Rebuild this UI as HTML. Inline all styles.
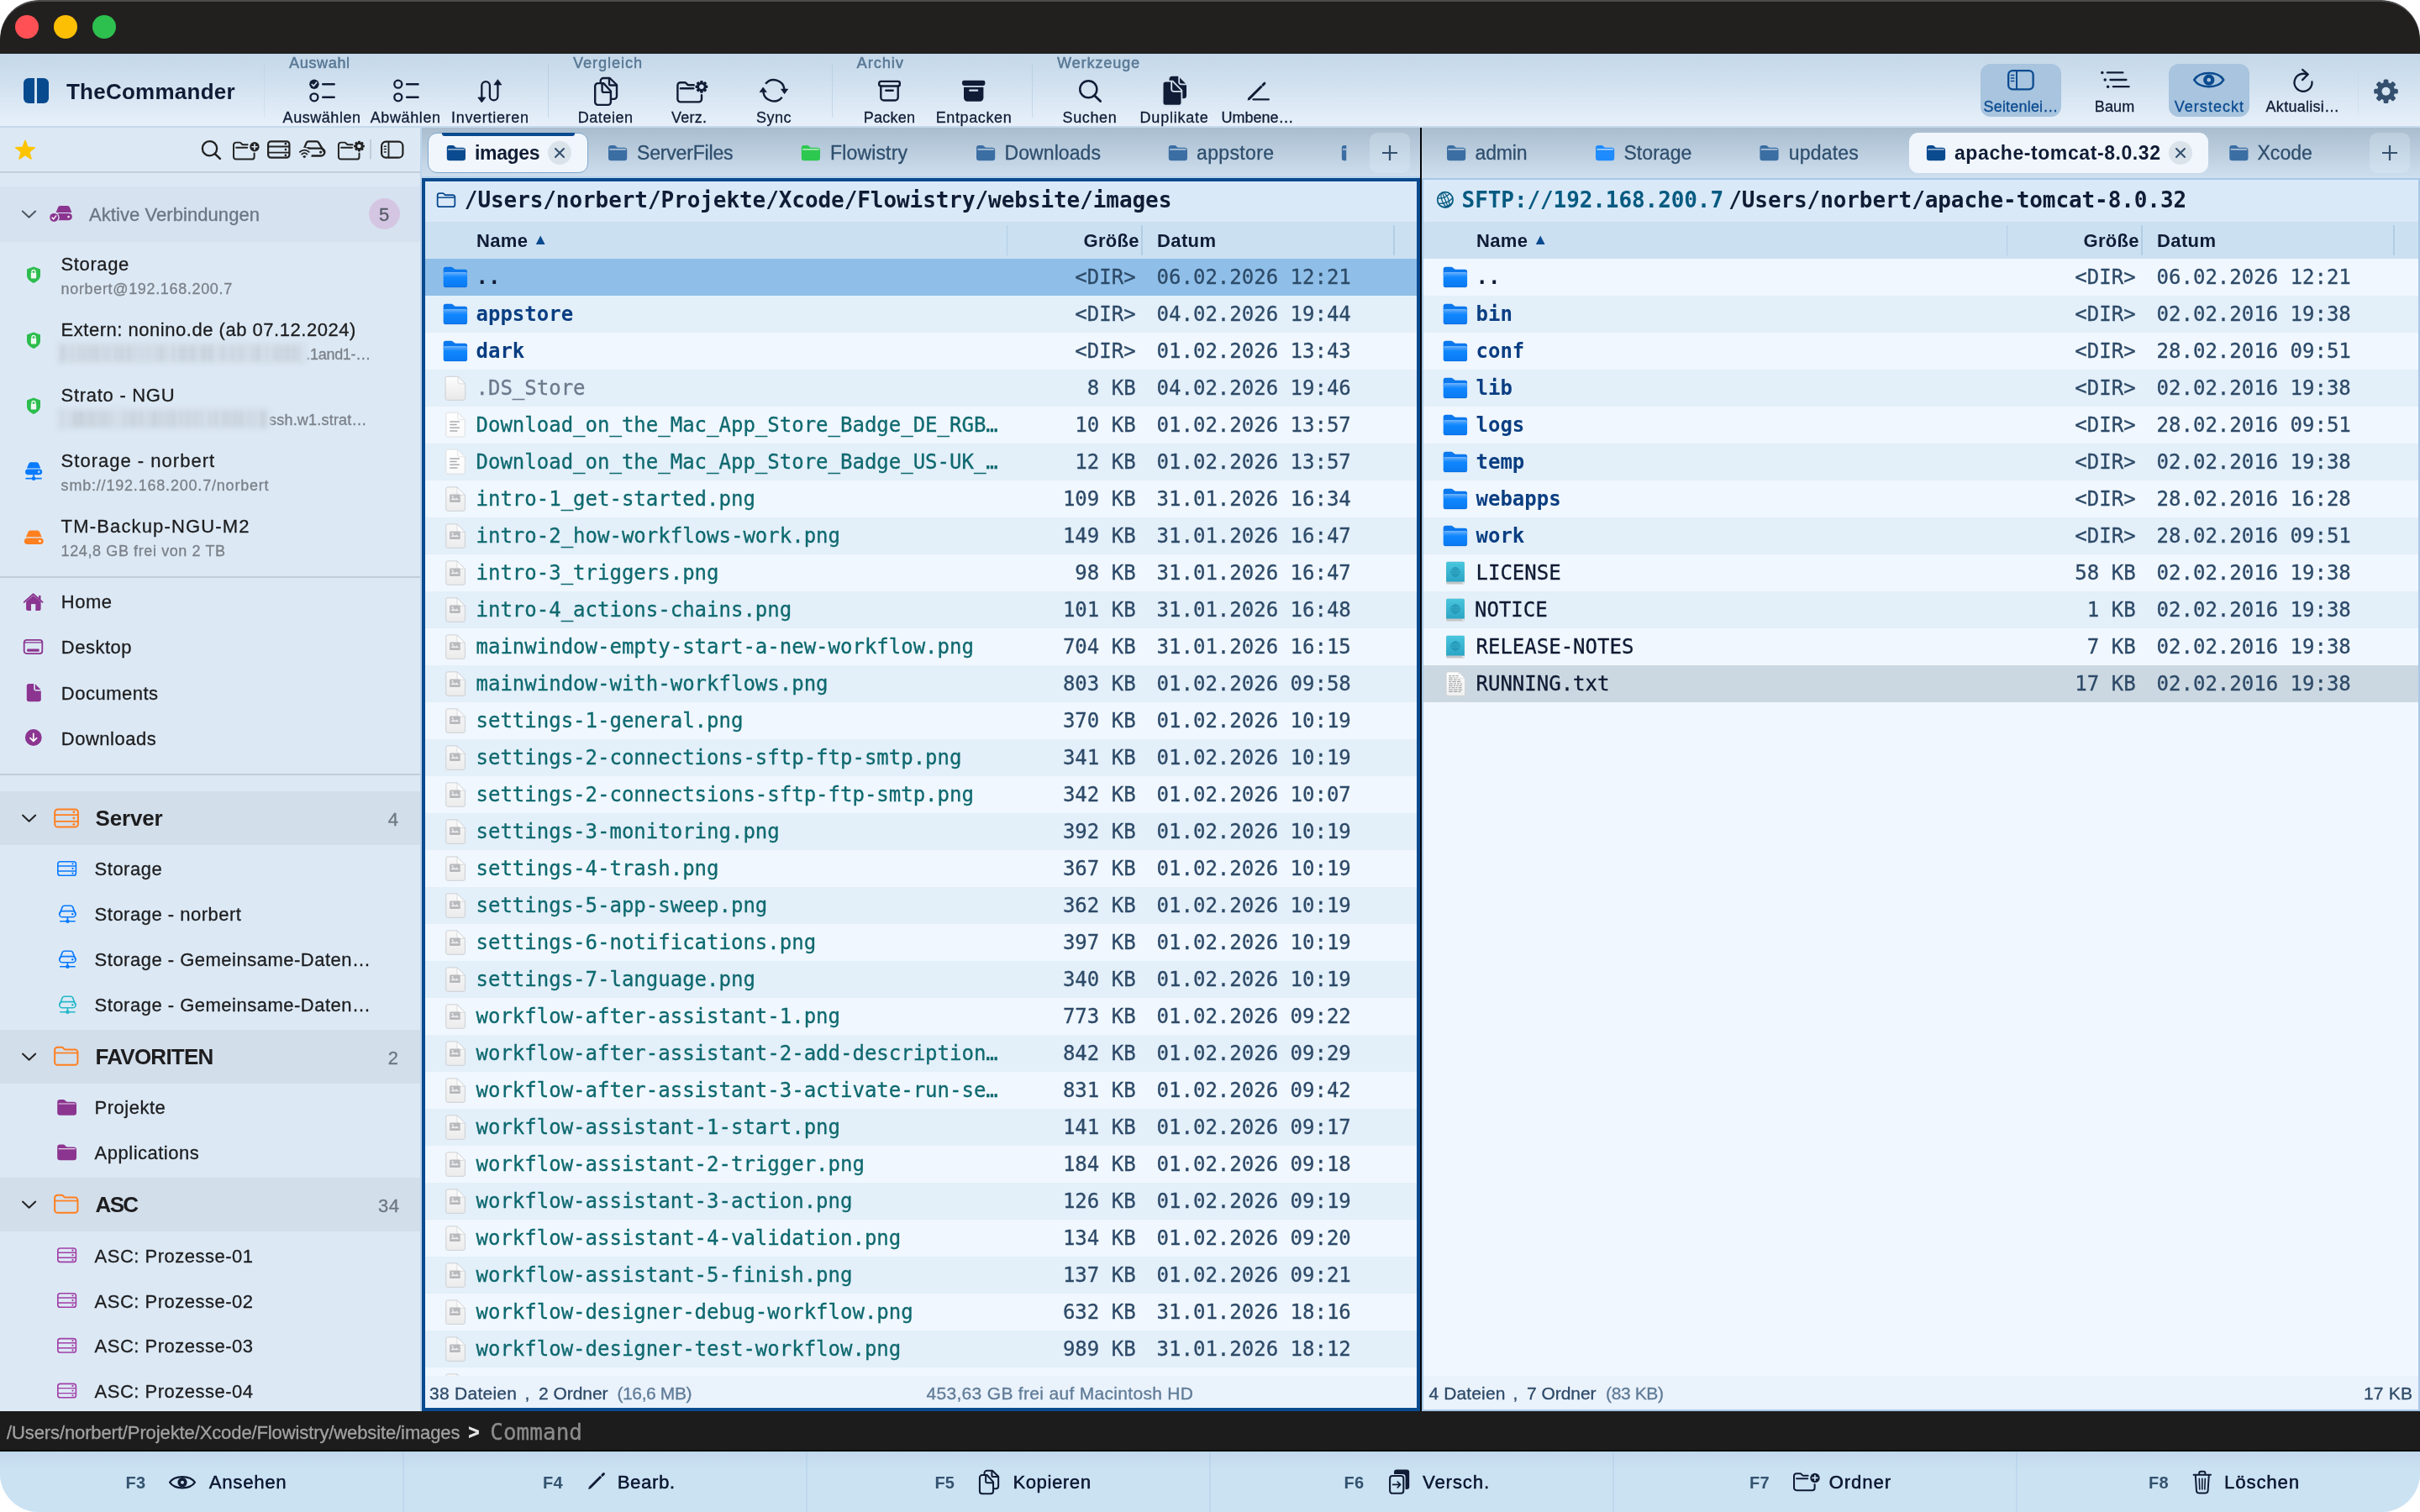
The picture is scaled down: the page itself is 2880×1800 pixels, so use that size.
<!DOCTYPE html><html lang="de"><head><meta charset="utf-8"><title>TheCommander</title><style>
html,body{margin:0;padding:0;background:#fff;}
body{width:2880px;height:1800px;overflow:hidden;position:relative;}
#win{position:absolute;left:0;top:0;width:2880px;height:1800px;border-radius:46px;overflow:hidden;background:#dce9f5;will-change:transform;}
.t{position:absolute;white-space:pre;line-height:1;-webkit-text-stroke:0.3px;}
.b{-webkit-text-stroke:0;}
.s{font-family:"Liberation Sans", sans-serif;}
.m{font-family:"DejaVu Sans Mono", "Liberation Mono", monospace;}
.ov{position:absolute;left:0;top:0;pointer-events:none;}
.row{position:absolute;height:44px;}
</style></head><body><div id="win">
<div style="position:absolute;left:0px;top:0px;width:2880px;height:64px;background:#22201f;box-shadow:inset 0 2px 0 rgba(255,255,255,.20);border-radius:46px 46px 0 0;"></div>
<div style="position:absolute;left:18px;top:18px;width:28px;height:28px;background:#ff5055;border-radius:50%;"></div>
<div style="position:absolute;left:64px;top:18px;width:28px;height:28px;background:#fcbf04;border-radius:50%;"></div>
<div style="position:absolute;left:110px;top:18px;width:28px;height:28px;background:#2dc04f;border-radius:50%;"></div>
<div style="position:absolute;left:0px;top:64px;width:2880px;height:86px;background:linear-gradient(#c4d8e9,#cfdfee 35%,#e7f0fa);"></div>
<div style="position:absolute;left:0px;top:150px;width:2880px;height:2px;background:#c4d9eb;"></div>
<div style="position:absolute;left:28px;top:93px;width:13px;height:30px;background:#074a8e;border-radius:6px 0 0 6px;"></div>
<div style="position:absolute;left:44.3px;top:93px;width:13.3px;height:30px;background:#074a8e;border-radius:0 6px 6px 0;"></div>
<span class="t s b" style="left:79.00px;top:95.99px;font-size:26px;color:#101c35;font-weight:bold;letter-spacing:0.243px;">TheCommander</span>
<div style="position:absolute;left:313.5px;top:76px;width:1.5px;height:64px;background:rgba(160,190,215,.22);"></div>
<div style="position:absolute;left:651.5px;top:76px;width:1.5px;height:64px;background:rgba(160,190,215,.42);"></div>
<div style="position:absolute;left:989.5px;top:76px;width:1.5px;height:64px;background:rgba(160,190,215,.42);"></div>
<div style="position:absolute;left:1227.5px;top:76px;width:1.5px;height:64px;background:rgba(160,190,215,.42);"></div>
<div style="position:absolute;left:2805.5px;top:84px;width:1.4px;height:52px;background:rgba(190,210,228,.4);"></div>
<span class="t s" style="left:344.00px;top:65.76px;font-size:18px;color:#5d7c98;letter-spacing:0.659px;text-shadow:0.35px 0 0 #5d7c98;">Auswahl</span>
<span class="t s" style="left:682.00px;top:65.76px;font-size:18px;color:#5d7c98;letter-spacing:0.992px;text-shadow:0.35px 0 0 #5d7c98;">Vergleich</span>
<span class="t s" style="left:1019.60px;top:65.76px;font-size:18px;color:#5d7c98;letter-spacing:1.037px;text-shadow:0.35px 0 0 #5d7c98;">Archiv</span>
<span class="t s" style="left:1258.00px;top:65.76px;font-size:18px;color:#5d7c98;letter-spacing:0.910px;text-shadow:0.35px 0 0 #5d7c98;">Werkzeuge</span>
<span class="t s" style="left:336.60px;top:130.96px;font-size:18px;color:#101c35;letter-spacing:0.542px;">Auswählen</span>
<span class="t s" style="left:440.75px;top:130.96px;font-size:18px;color:#101c35;letter-spacing:0.605px;">Abwählen</span>
<span class="t s" style="left:537.00px;top:130.96px;font-size:18px;color:#101c35;letter-spacing:0.695px;">Invertieren</span>
<span class="t s" style="left:687.75px;top:130.96px;font-size:18px;color:#101c35;letter-spacing:0.542px;">Dateien</span>
<span class="t s" style="left:799.00px;top:130.96px;font-size:18px;color:#101c35;letter-spacing:0.242px;">Verz.</span>
<span class="t s" style="left:899.95px;top:130.96px;font-size:18px;color:#101c35;letter-spacing:0.490px;">Sync</span>
<span class="t s" style="left:1027.75px;top:130.96px;font-size:18px;color:#101c35;letter-spacing:0.251px;">Packen</span>
<span class="t s" style="left:1113.70px;top:130.96px;font-size:18px;color:#101c35;letter-spacing:0.617px;">Entpacken</span>
<span class="t s" style="left:1264.50px;top:130.96px;font-size:18px;color:#101c35;letter-spacing:0.628px;">Suchen</span>
<span class="t s" style="left:1356.60px;top:130.96px;font-size:18px;color:#101c35;letter-spacing:0.769px;">Duplikate</span>
<span class="t s" style="left:1453.50px;top:130.96px;font-size:18px;color:#101c35;letter-spacing:-0.008px;">Umbene…</span>
<div style="position:absolute;left:2357.4px;top:76px;width:95.4px;height:63.4px;background:#a8c4de;border-radius:12px;"></div>
<div style="position:absolute;left:2581px;top:76px;width:96px;height:63.4px;background:#a8c4de;border-radius:12px;"></div>
<span class="t s" style="left:2360.50px;top:118.26px;font-size:18px;color:#0a4a8f;letter-spacing:0.195px;">Seitenlei…</span>
<span class="t s" style="left:2492.85px;top:118.26px;font-size:18px;color:#101c35;letter-spacing:0.090px;">Baum</span>
<span class="t s" style="left:2587.75px;top:118.26px;font-size:18px;color:#0a4a8f;letter-spacing:1.034px;">Versteckt</span>
<span class="t s" style="left:2696.60px;top:118.26px;font-size:18px;color:#101c35;letter-spacing:0.263px;">Aktualisi…</span>
<svg class="ov" width="2880" height="160" viewBox="0 0 2880 160"><g transform="translate(367.70,94.00)" ><circle cx="6.2" cy="6.2" r="5.7" fill="#101c35"/><path d="M3.6 6.5 L5.5 8.5 L9 4.2" fill="none" stroke="#cfdfee" stroke-width="1.7" stroke-linecap="round" stroke-linejoin="round"/><circle cx="6.2" cy="21.8" r="4.5" fill="none" stroke="#101c35" stroke-width="2.3" stroke-linecap="round" stroke-linejoin="round"/><path d="M16.5 6.2 H30 M16.5 21.8 H30" fill="none" stroke="#101c35" stroke-width="2.4" stroke-linecap="round" stroke-linejoin="round"/></g><g transform="translate(467.60,94.00)" ><circle cx="6.2" cy="6.2" r="4.5" fill="none" stroke="#101c35" stroke-width="2.3" stroke-linecap="round" stroke-linejoin="round"/><circle cx="6.2" cy="21.8" r="4.5" fill="none" stroke="#101c35" stroke-width="2.3" stroke-linecap="round" stroke-linejoin="round"/><path d="M16.5 6.2 H30 M16.5 21.8 H30" fill="none" stroke="#101c35" stroke-width="2.4" stroke-linecap="round" stroke-linejoin="round"/></g><path d="M573.3 117 V101.9 a4.8 4.8 0 0 1 9.6 0 V114.7 a4.75 4.75 0 0 0 9.5 0 V100" fill="none" stroke="#101c35" stroke-width="2.3" stroke-linecap="round" stroke-linejoin="round"/><path d="M568.8 116 h9 l-4.5 6 z M587.9 100.9 h9 l-4.5 -6.2 z" fill="#101c35" stroke="#101c35" stroke-width="0.8" stroke-linejoin="round"/><g transform="translate(707.10,91.40)" ><path d="M7.6 7.2 V5 a3.4 3.4 0 0 1 3.4 -3.4 H18.6 L26.9 9.6 V23.1 a3.4 3.4 0 0 1 -3.4 3.4 H21" fill="none" stroke="#101c35" stroke-width="2.4" stroke-linecap="round" stroke-linejoin="round"/><path d="M17.9 2 V8.3 a1.8 1.8 0 0 0 1.8 1.8 H26.4" fill="none" stroke="#101c35" stroke-width="2.4" stroke-linecap="round" stroke-linejoin="round"/><path d="M4.5 7.7 H11.2 L19.8 17.1 V30.1 a3.4 3.4 0 0 1 -3.4 3.4 H4.5 a3.4 3.4 0 0 1 -3.4 -3.4 V11.1 a3.4 3.4 0 0 1 3.4 -3.4 z" fill="none" stroke="#101c35" stroke-width="2.4" stroke-linecap="round" stroke-linejoin="round"/><path d="M9.5 8.2 V16.7 a1.8 1.8 0 0 0 1.8 1.8 H19.4" fill="none" stroke="#101c35" stroke-width="2.4" stroke-linecap="round" stroke-linejoin="round"/></g><g transform="translate(805.20,97.00)" ><path d="M29.8 16.2 V21 a3.4 3.4 0 0 1 -3.4 3.4 H4.6 a3.4 3.4 0 0 1 -3.4 -3.4 V4.6 a3.4 3.4 0 0 1 3.4 -3.4 H9.5 a2.5 2.5 0 0 1 1.8 0.8 L12.6 3.4 a2.5 2.5 0 0 0 1.8 0.8 H20.5" fill="none" stroke="#101c35" stroke-width="2.4" stroke-linecap="round" stroke-linejoin="round"/><path d="M4.8 8.2 H20" fill="none" stroke="#101c35" stroke-width="2.4" stroke-linecap="round" stroke-linejoin="round"/><circle cx="29.7" cy="6.3" r="5.62" fill="#101c35"/><rect x="27.95" y="-1.10" width="3.5" height="3.70" rx="1.0" fill="#101c35" transform="rotate(0 29.7 6.3)"/><rect x="27.95" y="-1.10" width="3.5" height="3.70" rx="1.0" fill="#101c35" transform="rotate(45 29.7 6.3)"/><rect x="27.95" y="-1.10" width="3.5" height="3.70" rx="1.0" fill="#101c35" transform="rotate(90 29.7 6.3)"/><rect x="27.95" y="-1.10" width="3.5" height="3.70" rx="1.0" fill="#101c35" transform="rotate(135 29.7 6.3)"/><rect x="27.95" y="-1.10" width="3.5" height="3.70" rx="1.0" fill="#101c35" transform="rotate(180 29.7 6.3)"/><rect x="27.95" y="-1.10" width="3.5" height="3.70" rx="1.0" fill="#101c35" transform="rotate(225 29.7 6.3)"/><rect x="27.95" y="-1.10" width="3.5" height="3.70" rx="1.0" fill="#101c35" transform="rotate(270 29.7 6.3)"/><rect x="27.95" y="-1.10" width="3.5" height="3.70" rx="1.0" fill="#101c35" transform="rotate(315 29.7 6.3)"/><circle cx="29.7" cy="6.3" r="2.7" fill="#d4e3f1"/></g><path d="M911.11 99.87 A12.6 12.6 0 0 1 933.41 106.26" fill="none" stroke="#101c35" stroke-width="2.4" stroke-linecap="butt" stroke-linejoin="round"/><path d="M930.69 115.73 A12.6 12.6 0 0 1 908.39 109.34" fill="none" stroke="#101c35" stroke-width="2.4" stroke-linecap="butt" stroke-linejoin="round"/><path d="M929.50 106.10 L937.70 106.10 L933.60 111.70 Z" fill="#101c35" stroke="#101c35" stroke-width="0.7" stroke-linejoin="round"/><path d="M904.10 109.60 L912.30 109.60 L908.20 104.00 Z" fill="#101c35" stroke="#101c35" stroke-width="0.7" stroke-linejoin="round"/><g transform="translate(1045.00,95.70)" ><rect x="1.2" y="1.2" width="24.6" height="5.6" rx="2" fill="none" stroke="#101c35" stroke-width="2.4" stroke-linecap="round" stroke-linejoin="round"/><path d="M3.3 7 V20.3 a3.5 3.5 0 0 0 3.5 3.5 H20.2 a3.5 3.5 0 0 0 3.5 -3.5 V7" fill="none" stroke="#101c35" stroke-width="2.4" stroke-linecap="round" stroke-linejoin="round"/><path d="M9.3 12 H17.7" fill="none" stroke="#101c35" stroke-width="2.4" stroke-linecap="round" stroke-linejoin="round"/></g><g transform="translate(1145.00,95.70)" ><rect x="0" y="0" width="27.4" height="6.2" rx="2.3" fill="#101c35"/><path d="M2 8 H25.4 V20.8 a4.2 4.2 0 0 1 -4.2 4.2 H6.2 a4.2 4.2 0 0 1 -4.2 -4.2 z" fill="#101c35"/><path d="M9.2 12 H18.2" fill="none" stroke="#d3e2f0" stroke-width="2.2" stroke-linecap="round" stroke-linejoin="round"/></g><g transform="translate(1284.00,95.00)" ><circle cx="11.30" cy="11.30" r="10.05" fill="none" stroke="#101c35" stroke-width="2.5" stroke-linecap="round" stroke-linejoin="round"/><path d="M18.60 18.70 L25.60 25.50" fill="none" stroke="#101c35" stroke-width="2.8" stroke-linecap="round" stroke-linejoin="round"/></g><g transform="translate(1384.00,90.70)" ><path d="M11 0 H18.3 L28 9.7 V23 a3.5 3.5 0 0 1 -3.5 3.5 H11 a3.5 3.5 0 0 1 -3.5 -3.5 V3.5 a3.5 3.5 0 0 1 3.5 -3.5 z" fill="#101c35"/><path d="M19.2 0.4 V7.4 a2.3 2.3 0 0 0 2.3 2.3 H27.8" fill="none" stroke="#d3e2f0" stroke-width="1.8" stroke-linecap="round" stroke-linejoin="round"/><path d="M3.3 6 H11.6 L22.4 16.8 V31.2 a3.7 3.7 0 0 1 -3.7 3.7 H3.3 a3.7 3.7 0 0 1 -3.7 -3.7 V9.7 a3.7 3.7 0 0 1 3.7 -3.7 z" fill="#101c35" stroke="#d3e2f0" stroke-width="1.8"/><path d="M10.2 6.6 V15.6 a2.6 2.6 0 0 0 2.6 2.6 H21.8" fill="none" stroke="#d3e2f0" stroke-width="1.9" stroke-linecap="round" stroke-linejoin="round"/></g><g transform="translate(1484.00,98.00)" ><path d="M2.2 19.9 L17.6 4.5" fill="none" stroke="#101c35" stroke-width="3.0" stroke-linecap="butt" stroke-linejoin="round"/><path d="M19 3.1 L20.9 1.2" fill="none" stroke="#101c35" stroke-width="3.0" stroke-linecap="round" stroke-linejoin="round"/><path d="M0.6 21.6 L3.6 20.9 L1.3 18.6 Z" fill="#101c35"/><path d="M7.5 20.4 H25.8" fill="none" stroke="#101c35" stroke-width="2.3" stroke-linecap="round" stroke-linejoin="round"/></g><g transform="translate(2389.00,83.00)" ><rect x="1.15" y="1.15" width="29.5" height="22.2" rx="5" fill="none" stroke="#0a4a8f" stroke-width="2.3" stroke-linecap="round" stroke-linejoin="round"/><path d="M10.97 1 V23.50" fill="none" stroke="#0a4a8f" stroke-width="1.9999999999999998" stroke-linecap="butt" stroke-linejoin="round"/><path d="M4.4 6.6 H7.77 M4.4 10 H7.77 M4.4 13.4 H7.77" fill="none" stroke="#0a4a8f" stroke-width="1.5" stroke-linecap="round" stroke-linejoin="round"/></g><circle cx="2501.8" cy="86.4" r="1.75" fill="#101c35"/><path d="M2507.8 86.4 H2526.4" fill="none" stroke="#101c35" stroke-width="2.3" stroke-linecap="round" stroke-linejoin="round"/><circle cx="2505.2" cy="95" r="1.75" fill="#101c35"/><path d="M2511.4 95 H2530.4" fill="none" stroke="#101c35" stroke-width="2.3" stroke-linecap="round" stroke-linejoin="round"/><circle cx="2508.6" cy="103.2" r="1.75" fill="#101c35"/><path d="M2514.8 103.2 H2533.6" fill="none" stroke="#101c35" stroke-width="2.3" stroke-linecap="round" stroke-linejoin="round"/><g transform="translate(2610.00,83.40)" ><path d="M1.20 11.75 C8.00 1.00 29.50 1.00 36.30 11.75 C29.50 22.50 8.00 22.50 1.20 11.75 Z" fill="none" stroke="#0a4a8f" stroke-width="2.5" stroke-linecap="round" stroke-linejoin="round"/><circle cx="18.75" cy="11.75" r="6.60" fill="#0a4a8f"/><circle cx="18.75" cy="11.75" r="2.30" fill="#a9c4de"/></g><path d="M2745.77 88.94 A10.5 10.5 0 1 0 2751.46 97.38" fill="none" stroke="#101c35" stroke-width="2.3" stroke-linecap="round" stroke-linejoin="round"/><path d="M2740.07 82.94 L2746.77 88.54 L2740.07 95.14" fill="none" stroke="#101c35" stroke-width="2.3" stroke-linecap="round" stroke-linejoin="round"/><circle cx="2839.5" cy="108.7" r="10.58" fill="#34506e"/><rect x="2836.60" y="94.40" width="5.8" height="7.15" rx="1.6" fill="#34506e" transform="rotate(0 2839.5 108.7)"/><rect x="2836.60" y="94.40" width="5.8" height="7.15" rx="1.6" fill="#34506e" transform="rotate(45 2839.5 108.7)"/><rect x="2836.60" y="94.40" width="5.8" height="7.15" rx="1.6" fill="#34506e" transform="rotate(90 2839.5 108.7)"/><rect x="2836.60" y="94.40" width="5.8" height="7.15" rx="1.6" fill="#34506e" transform="rotate(135 2839.5 108.7)"/><rect x="2836.60" y="94.40" width="5.8" height="7.15" rx="1.6" fill="#34506e" transform="rotate(180 2839.5 108.7)"/><rect x="2836.60" y="94.40" width="5.8" height="7.15" rx="1.6" fill="#34506e" transform="rotate(225 2839.5 108.7)"/><rect x="2836.60" y="94.40" width="5.8" height="7.15" rx="1.6" fill="#34506e" transform="rotate(270 2839.5 108.7)"/><rect x="2836.60" y="94.40" width="5.8" height="7.15" rx="1.6" fill="#34506e" transform="rotate(315 2839.5 108.7)"/><circle cx="2839.5" cy="108.7" r="5.0" fill="#d7e5f2"/></svg>
<div style="position:absolute;left:0px;top:152px;width:500px;height:1528px;background:#dce9f5;"></div>
<div style="position:absolute;left:0px;top:204px;width:500px;height:2px;background:#c2cfdb;"></div>
<div style="position:absolute;left:500px;top:152px;width:2px;height:1528px;background:#bdd4ea;"></div>
<div style="position:absolute;left:0px;top:222px;width:500px;height:66px;background:#d7e2f0;"></div>
<div style="position:absolute;left:0px;top:942px;width:500px;height:64px;background:#d2deea;"></div>
<div style="position:absolute;left:0px;top:1226px;width:500px;height:64px;background:#d2deea;"></div>
<div style="position:absolute;left:0px;top:1402px;width:500px;height:64px;background:#d2deea;"></div>
<div style="position:absolute;left:0px;top:686px;width:500px;height:2px;background:#c0cedb;"></div>
<div style="position:absolute;left:0px;top:921px;width:500px;height:2px;background:#c0cedb;"></div>
<span class="t s" style="left:106.00px;top:244.78px;font-size:22px;color:#6a7684;letter-spacing:0.065px;">Aktive Verbindungen</span>
<div style="position:absolute;left:438.5px;top:236.3px;width:37px;height:37px;background:#d4c6e2;border-radius:50%;"></div>
<span class="t s" style="left:450.88px;top:244.98px;font-size:22px;color:#555b66;">5</span>
<span class="t s" style="left:72.60px;top:303.88px;font-size:22px;color:#1d1d1f;letter-spacing:0.606px;">Storage</span>
<span class="t s" style="left:72.60px;top:334.76px;font-size:18px;color:#7b8088;letter-spacing:0.659px;">norbert@192.168.200.7</span>
<span class="t s" style="left:72.60px;top:381.88px;font-size:22px;color:#1d1d1f;letter-spacing:0.524px;">Extern: nonino.de (ab 07.12.2024)</span>
<span class="t s" style="left:364.30px;top:412.76px;font-size:18px;color:#7b8088;letter-spacing:-0.295px;">.1and1-…</span>
<span class="t s" style="left:72.60px;top:459.88px;font-size:22px;color:#1d1d1f;letter-spacing:0.714px;">Strato - NGU</span>
<span class="t s" style="left:320.00px;top:490.76px;font-size:18px;color:#7b8088;letter-spacing:0.206px;">ssh.w1.strat…</span>
<span class="t s" style="left:72.60px;top:537.88px;font-size:22px;color:#1d1d1f;letter-spacing:1.012px;">Storage - norbert</span>
<span class="t s" style="left:72.60px;top:568.76px;font-size:18px;color:#7b8088;letter-spacing:0.802px;">smb://192.168.200.7/norbert</span>
<span class="t s" style="left:72.60px;top:615.88px;font-size:22px;color:#1d1d1f;letter-spacing:1.161px;">TM-Backup-NGU-M2</span>
<span class="t s" style="left:72.60px;top:646.76px;font-size:18px;color:#7b8088;letter-spacing:0.606px;">124,8 GB frei von 2 TB</span>
<div style="position:absolute;left:66px;top:406px;width:300px;height:29px;background:#d7e2ed;filter:blur(2px);border-radius:5px;"></div>
<div style="position:absolute;left:72px;top:411px;width:288px;height:19px;background:linear-gradient(90deg,#c3ced9 0.0px 3.6px,#d6e1ec 3.6px 5.7px,#c5d0db 5.7px 8.4px,#d6e1ec 8.4px 11.8px,#c9d4df 11.8px 16.3px,#d6e1ec 16.3px 21.0px,#c3ced9 21.0px 23.6px,#d6e1ec 23.6px 26.7px,#c3ced9 26.7px 30.0px,#d6e1ec 30.0px 33.4px,#c9d4df 33.4px 38.8px,#d6e1ec 38.8px 40.8px,#c3ced9 40.8px 45.5px,#d6e1ec 45.5px 49.0px,#c9d4df 49.0px 53.5px,#d6e1ec 53.5px 56.4px,#c5d0db 56.4px 59.1px,#d6e1ec 59.1px 63.6px,#c5d0db 63.6px 67.6px,#d6e1ec 67.6px 70.9px,#c3ced9 70.9px 75.4px,#d6e1ec 75.4px 79.3px,#c5d0db 79.3px 83.8px,#d6e1ec 83.8px 87.6px,#c3ced9 87.6px 90.4px,#d6e1ec 90.4px 94.4px,#cdd8e3 94.4px 99.1px,#d6e1ec 99.1px 102.3px,#cdd8e3 102.3px 107.5px,#d6e1ec 107.5px 110.7px,#c9d4df 110.7px 114.4px,#d6e1ec 114.4px 116.8px,#c5d0db 116.8px 121.7px,#d6e1ec 121.7px 124.1px,#cdd8e3 124.1px 128.4px,#d6e1ec 128.4px 133.0px,#c3ced9 133.0px 136.5px,#d6e1ec 136.5px 141.4px,#c5d0db 141.4px 145.7px,#d6e1ec 145.7px 147.8px,#c3ced9 147.8px 150.8px,#d6e1ec 150.8px 154.0px,#c5d0db 154.0px 159.9px,#d6e1ec 159.9px 161.7px,#cdd8e3 161.7px 165.4px,#d6e1ec 165.4px 168.1px,#c3ced9 168.1px 172.6px,#d6e1ec 172.6px 175.7px,#c3ced9 175.7px 181.5px,#d6e1ec 181.5px 184.7px,#cdd8e3 184.7px 187.4px,#d6e1ec 187.4px 191.4px,#c5d0db 191.4px 194.8px,#d6e1ec 194.8px 197.7px,#c9d4df 197.7px 200.3px,#d6e1ec 200.3px 203.4px,#c9d4df 203.4px 208.0px,#d6e1ec 208.0px 211.3px,#c9d4df 211.3px 216.4px,#d6e1ec 216.4px 218.4px,#cdd8e3 218.4px 222.3px,#d6e1ec 222.3px 227.0px,#c5d0db 227.0px 229.8px,#d6e1ec 229.8px 232.9px,#c5d0db 232.9px 238.5px,#d6e1ec 238.5px 242.8px,#cdd8e3 242.8px 247.8px,#d6e1ec 247.8px 252.7px,#c9d4df 252.7px 258.6px,#d6e1ec 258.6px 260.6px,#c3ced9 260.6px 263.7px,#d6e1ec 263.7px 267.5px,#c5d0db 267.5px 271.7px,#d6e1ec 271.7px 275.2px,#c5d0db 275.2px 278.7px,#d6e1ec 278.7px 280.7px,#c9d4df 280.7px 285.3px,#d6e1ec 285.3px 288.0px,#c3ced9 288.0px 292.9px,#d6e1ec 292.9px 296.2px);filter:blur(2.6px);"></div>
<div style="position:absolute;left:66px;top:484px;width:256px;height:29px;background:#d7e2ed;filter:blur(2px);border-radius:5px;"></div>
<div style="position:absolute;left:72px;top:489px;width:244px;height:19px;background:linear-gradient(90deg,#cdd8e3 0.0px 4.1px,#d6e1ec 4.1px 8.6px,#cdd8e3 8.6px 12.5px,#d6e1ec 12.5px 15.4px,#c3ced9 15.4px 20.1px,#d6e1ec 20.1px 21.9px,#c3ced9 21.9px 27.8px,#d6e1ec 27.8px 30.8px,#c3ced9 30.8px 34.5px,#d6e1ec 34.5px 36.2px,#c5d0db 36.2px 40.7px,#d6e1ec 40.7px 44.1px,#c9d4df 44.1px 48.7px,#d6e1ec 48.7px 50.5px,#c5d0db 50.5px 55.1px,#d6e1ec 55.1px 57.1px,#cdd8e3 57.1px 63.0px,#d6e1ec 63.0px 66.6px,#cdd8e3 66.6px 69.5px,#d6e1ec 69.5px 74.0px,#c9d4df 74.0px 78.2px,#d6e1ec 78.2px 80.8px,#c5d0db 80.8px 83.6px,#d6e1ec 83.6px 86.3px,#c3ced9 86.3px 90.5px,#d6e1ec 90.5px 94.4px,#c5d0db 94.4px 97.6px,#d6e1ec 97.6px 102.5px,#c3ced9 102.5px 105.5px,#d6e1ec 105.5px 108.9px,#c3ced9 108.9px 114.0px,#d6e1ec 114.0px 116.6px,#c5d0db 116.6px 121.5px,#d6e1ec 121.5px 123.9px,#c9d4df 123.9px 129.6px,#d6e1ec 129.6px 132.4px,#c5d0db 132.4px 136.7px,#d6e1ec 136.7px 141.0px,#c9d4df 141.0px 145.7px,#d6e1ec 145.7px 149.3px,#c9d4df 149.3px 154.6px,#d6e1ec 154.6px 159.0px,#c3ced9 159.0px 162.2px,#d6e1ec 162.2px 165.4px,#cdd8e3 165.4px 171.4px,#d6e1ec 171.4px 175.7px,#c5d0db 175.7px 179.1px,#d6e1ec 179.1px 183.0px,#c5d0db 183.0px 187.1px,#d6e1ec 187.1px 191.8px,#c9d4df 191.8px 197.7px,#d6e1ec 197.7px 200.5px,#c5d0db 200.5px 203.3px,#d6e1ec 203.3px 206.5px,#c3ced9 206.5px 209.7px,#d6e1ec 209.7px 213.4px,#c3ced9 213.4px 217.5px,#d6e1ec 217.5px 221.3px,#cdd8e3 221.3px 226.7px,#d6e1ec 226.7px 228.7px,#cdd8e3 228.7px 233.9px,#d6e1ec 233.9px 238.0px,#c5d0db 238.0px 243.6px,#d6e1ec 243.6px 246.7px);filter:blur(2.6px);"></div>
<span class="t s" style="left:72.80px;top:706.38px;font-size:22px;color:#1d1d1f;letter-spacing:0.500px;">Home</span>
<span class="t s" style="left:72.80px;top:760.48px;font-size:22px;color:#1d1d1f;letter-spacing:0.500px;">Desktop</span>
<span class="t s" style="left:72.80px;top:814.58px;font-size:22px;color:#1d1d1f;letter-spacing:0.500px;">Documents</span>
<span class="t s" style="left:72.80px;top:868.68px;font-size:22px;color:#1d1d1f;letter-spacing:0.500px;">Downloads</span>
<span class="t s b" style="left:113.60px;top:961.39px;font-size:26px;color:#1d1d1f;font-weight:bold;letter-spacing:-0.194px;">Server</span>
<span class="t s b" style="left:113.60px;top:1245.39px;font-size:26px;color:#1d1d1f;font-weight:bold;letter-spacing:-0.770px;">FAVORITEN</span>
<span class="t s b" style="left:113.60px;top:1421.39px;font-size:26px;color:#1d1d1f;font-weight:bold;letter-spacing:-1.703px;">ASC</span>
<span class="t s" style="left:461.75px;top:965.38px;font-size:22px;color:#6e7781;">4</span>
<span class="t s" style="left:461.75px;top:1249.38px;font-size:22px;color:#6e7781;">2</span>
<span class="t s" style="left:449.92px;top:1425.38px;font-size:22px;color:#6e7781;letter-spacing:0.600px;">34</span>
<span class="t s" style="left:112.60px;top:1024.38px;font-size:22px;color:#1d1d1f;letter-spacing:0.500px;">Storage</span>
<span class="t s" style="left:112.60px;top:1078.38px;font-size:22px;color:#1d1d1f;letter-spacing:0.500px;">Storage - norbert</span>
<span class="t s" style="left:112.60px;top:1132.38px;font-size:22px;color:#1d1d1f;letter-spacing:0.500px;">Storage - Gemeinsame-Daten…</span>
<span class="t s" style="left:112.60px;top:1186.38px;font-size:22px;color:#1d1d1f;letter-spacing:0.500px;">Storage - Gemeinsame-Daten…</span>
<span class="t s" style="left:112.60px;top:1308.38px;font-size:22px;color:#1d1d1f;letter-spacing:0.500px;">Projekte</span>
<span class="t s" style="left:112.60px;top:1361.98px;font-size:22px;color:#1d1d1f;letter-spacing:0.500px;">Applications</span>
<span class="t s" style="left:112.60px;top:1484.78px;font-size:22px;color:#1d1d1f;letter-spacing:0.500px;">ASC: Prozesse-01</span>
<span class="t s" style="left:112.60px;top:1538.58px;font-size:22px;color:#1d1d1f;letter-spacing:0.500px;">ASC: Prozesse-02</span>
<span class="t s" style="left:112.60px;top:1592.38px;font-size:22px;color:#1d1d1f;letter-spacing:0.500px;">ASC: Prozesse-03</span>
<span class="t s" style="left:112.60px;top:1646.18px;font-size:22px;color:#1d1d1f;letter-spacing:0.500px;">ASC: Prozesse-04</span>
<svg class="ov" width="500" height="1680" viewBox="0 0 500 1680"><path d="M30.00 167.50 L32.94 175.36 L41.32 175.72 L34.75 180.94 L36.99 189.03 L30.00 184.40 L23.01 189.03 L25.25 180.94 L18.68 175.72 L27.06 175.36 Z" fill="#ffc400" stroke="#ffc400" stroke-width="1.6" stroke-linejoin="round"/><g transform="translate(239.80,167.00)" ><circle cx="9.71" cy="9.71" r="8.64" fill="none" stroke="#222" stroke-width="2.3" stroke-linecap="round" stroke-linejoin="round"/><path d="M15.98 16.07 L22.00 21.91" fill="none" stroke="#222" stroke-width="2.5999999999999996" stroke-linecap="round" stroke-linejoin="round"/></g><g transform="translate(277.00,168.60) scale(0.86)" ><path d="M29.8 16.2 V21 a3.4 3.4 0 0 1 -3.4 3.4 H4.6 a3.4 3.4 0 0 1 -3.4 -3.4 V4.6 a3.4 3.4 0 0 1 3.4 -3.4 H9.5 a2.5 2.5 0 0 1 1.8 0.8 L12.6 3.4 a2.5 2.5 0 0 0 1.8 0.8 H20.5" fill="none" stroke="#222" stroke-width="2.3" stroke-linecap="round" stroke-linejoin="round"/><path d="M4.8 8.2 H20" fill="none" stroke="#222" stroke-width="2.3" stroke-linecap="round" stroke-linejoin="round"/><circle cx="30.2" cy="7.2" r="6.6" fill="#222"/><path d="M26.8 7.2 h6.8 M30.2 3.8 v6.8" fill="none" stroke="#dce9f5" stroke-width="1.9" stroke-linecap="round" stroke-linejoin="round"/></g><g transform="translate(318.00,167.30)" ><rect x="1.1" y="1.1" width="25.30" height="19.30" rx="3.33" fill="none" stroke="#222" stroke-width="2.2" stroke-linecap="round" stroke-linejoin="round"/><path d="M1 7.17 H26.50 M1 14.33 H26.50" fill="none" stroke="#222" stroke-width="1.87" stroke-linecap="butt" stroke-linejoin="round"/><circle cx="21.94" cy="3.88" r="1.34" fill="#222"/><circle cx="21.94" cy="10.75" r="1.34" fill="#222"/><circle cx="21.94" cy="17.62" r="1.34" fill="#222"/></g><g transform="translate(356.00,167.30)" ><path d="M11.5 9.2 L7.2 9.2 M5.6 10.4 L8.6 2.8 a3 3 0 0 1 2.8 -1.8 H20.6 a3 3 0 0 1 2.8 1.8 L29.6 13" fill="none" stroke="#222" stroke-width="2.3" stroke-linecap="round" stroke-linejoin="round"/><path d="M11 9.4 H26 a4.4 4.4 0 0 1 0 8.8 H11.8" fill="none" stroke="#222" stroke-width="2.3" stroke-linecap="round" stroke-linejoin="round"/><circle cx="25.6" cy="13.8" r="1.6" fill="#222"/><circle cx="6.2" cy="17" r="8.6" fill="#dce9f5"/><path d="M0.9 13.6 a7.6 7.6 0 0 1 10.8 0" fill="none" stroke="#222" stroke-width="1.9" stroke-linecap="round" stroke-linejoin="round"/><path d="M3.2 16.3 a4.4 4.4 0 0 1 6.2 0" fill="none" stroke="#222" stroke-width="1.9" stroke-linecap="round" stroke-linejoin="round"/><path d="M6.3 20.8 L4.6 19 a2.4 2.4 0 0 1 3.4 0 Z" fill="#222" stroke="#222" stroke-width="0.8" stroke-linejoin="round"/></g><g transform="translate(401.90,168.60) scale(0.86)" ><path d="M29.8 16.2 V21 a3.4 3.4 0 0 1 -3.4 3.4 H4.6 a3.4 3.4 0 0 1 -3.4 -3.4 V4.6 a3.4 3.4 0 0 1 3.4 -3.4 H9.5 a2.5 2.5 0 0 1 1.8 0.8 L12.6 3.4 a2.5 2.5 0 0 0 1.8 0.8 H20.5" fill="none" stroke="#222" stroke-width="2.3" stroke-linecap="round" stroke-linejoin="round"/><path d="M4.8 8.2 H20" fill="none" stroke="#222" stroke-width="2.3" stroke-linecap="round" stroke-linejoin="round"/><circle cx="29.7" cy="6.3" r="5.62" fill="#222"/><rect x="27.95" y="-1.10" width="3.5" height="3.70" rx="1.0" fill="#222" transform="rotate(0 29.7 6.3)"/><rect x="27.95" y="-1.10" width="3.5" height="3.70" rx="1.0" fill="#222" transform="rotate(45 29.7 6.3)"/><rect x="27.95" y="-1.10" width="3.5" height="3.70" rx="1.0" fill="#222" transform="rotate(90 29.7 6.3)"/><rect x="27.95" y="-1.10" width="3.5" height="3.70" rx="1.0" fill="#222" transform="rotate(135 29.7 6.3)"/><rect x="27.95" y="-1.10" width="3.5" height="3.70" rx="1.0" fill="#222" transform="rotate(180 29.7 6.3)"/><rect x="27.95" y="-1.10" width="3.5" height="3.70" rx="1.0" fill="#222" transform="rotate(225 29.7 6.3)"/><rect x="27.95" y="-1.10" width="3.5" height="3.70" rx="1.0" fill="#222" transform="rotate(270 29.7 6.3)"/><rect x="27.95" y="-1.10" width="3.5" height="3.70" rx="1.0" fill="#222" transform="rotate(315 29.7 6.3)"/><circle cx="29.7" cy="6.3" r="2.7" fill="#dce9f5"/></g><path d="M441 166 V189.6" stroke="#b9c6d2" stroke-width="1.6"/><g transform="translate(453.00,167.60)" ><rect x="1.1" y="1.1" width="25.3" height="19.0" rx="5" fill="none" stroke="#222" stroke-width="2.2" stroke-linecap="round" stroke-linejoin="round"/><path d="M9.49 1 V20.20" fill="none" stroke="#222" stroke-width="1.9000000000000001" stroke-linecap="butt" stroke-linejoin="round"/><path d="M4.4 6.6 H6.29 M4.4 10 H6.29 M4.4 13.4 H6.29" fill="none" stroke="#222" stroke-width="1.5" stroke-linecap="round" stroke-linejoin="round"/></g><g transform="translate(25.90,250.50)" ><path d="M1 1 L8.60 8.20 L16.20 1" fill="none" stroke="#4e5560" stroke-width="2.0" stroke-linecap="round" stroke-linejoin="round"/></g><g transform="translate(59.00,245.00)" ><path d="M7.6 8 L10 1.9 a2.8 2.8 0 0 1 2.6 -1.9 H21.4 a2.8 2.8 0 0 1 2.6 1.9 L26.4 8 Z" fill="#8b3590"/><rect x="6" y="9" width="20.8" height="8.2" rx="4.1" fill="#8b3590"/><circle cx="22.6" cy="13.1" r="1.35" fill="#ffffff" fill-opacity="0.9"/><circle cx="5.3" cy="13.9" r="6.4" fill="#d7e2f0"/><circle cx="5.3" cy="13.9" r="5" fill="#8b3590"/><path d="M3 14.1 L4.7 15.9 L7.7 11.9" fill="none" stroke="#ffffff" stroke-width="1.4" stroke-linecap="round" stroke-linejoin="round"/></g><g transform="translate(31.80,317.20)" ><path d="M8.2 0.2 L15.6 3 a1 1 0 0 1 0.6 0.9 V10.6 c0 4.2 -3.4 7.4 -8 9.2 c-4.6 -1.8 -8 -5 -8 -9.2 V3.9 a1 1 0 0 1 0.6 -0.9 Z" fill="#2dbd4e"/><rect x="5" y="7.6" width="6.4" height="6.6" rx="0.9" fill="#ffffff" fill-opacity="0.92"/><path d="M6.2 7.8 V6.3 a2 2 0 0 1 4 0 V7.8" fill="none" stroke="#ffffff" stroke-opacity="0.92" stroke-width="1.3"/></g><g transform="translate(31.80,395.20)" ><path d="M8.2 0.2 L15.6 3 a1 1 0 0 1 0.6 0.9 V10.6 c0 4.2 -3.4 7.4 -8 9.2 c-4.6 -1.8 -8 -5 -8 -9.2 V3.9 a1 1 0 0 1 0.6 -0.9 Z" fill="#2dbd4e"/><rect x="5" y="7.6" width="6.4" height="6.6" rx="0.9" fill="#ffffff" fill-opacity="0.92"/><path d="M6.2 7.8 V6.3 a2 2 0 0 1 4 0 V7.8" fill="none" stroke="#ffffff" stroke-opacity="0.92" stroke-width="1.3"/></g><g transform="translate(31.80,473.20)" ><path d="M8.2 0.2 L15.6 3 a1 1 0 0 1 0.6 0.9 V10.6 c0 4.2 -3.4 7.4 -8 9.2 c-4.6 -1.8 -8 -5 -8 -9.2 V3.9 a1 1 0 0 1 0.6 -0.9 Z" fill="#2dbd4e"/><rect x="5" y="7.6" width="6.4" height="6.6" rx="0.9" fill="#ffffff" fill-opacity="0.92"/><path d="M6.2 7.8 V6.3 a2 2 0 0 1 4 0 V7.8" fill="none" stroke="#ffffff" stroke-opacity="0.92" stroke-width="1.3"/></g><g transform="translate(30.00,550.20)" ><path d="M1.9 7.2 L4.2 1.7 a2.5 2.5 0 0 1 2.3 -1.7 H13.7 a2.5 2.5 0 0 1 2.3 1.7 L18.3 7.2 Z" fill="#0a7aff"/><rect x="0" y="8.2" width="20.2" height="6.8" rx="3.4" fill="#0a7aff"/><circle cx="16.3" cy="11.6" r="1.2" fill="#fff" fill-opacity="0.85"/><path d="M10.1 15 V19.5 M1.2 19.5 H19" fill="none" stroke="#0a7aff" stroke-width="1.7" stroke-linecap="round" stroke-linejoin="round"/><circle cx="10.1" cy="19.5" r="2.4" fill="#0a7aff"/></g><g transform="translate(28.90,631.50)" ><path d="M2.00 7.70 L4.60 1.80 a2.60 2.60 0 0 1 2.40 -1.80 H15.80 a2.60 2.60 0 0 1 2.40 1.80 L20.80 7.70 Z" fill="#ff8020"/><rect x="0" y="8.90" width="22.80" height="7.60" rx="3.80" fill="#ff8020"/><circle cx="18.50" cy="12.70" r="1.40" fill="#ffffff" fill-opacity="0.85"/></g><g transform="translate(27.80,706.30)" ><path d="M0.9 10.6 L11.8 0.9 L22.8 10.6" fill="none" stroke="#8b3590" stroke-width="1.9" stroke-linecap="round" stroke-linejoin="round"/><path d="M3.3 10 L11.8 2.6 L20.8 10 V18.8 a2 2 0 0 1 -2 2 H5.3 a2 2 0 0 1 -2 -2 Z" fill="#8b3590"/><rect x="18.3" y="2.6" width="2.4" height="5" fill="#8b3590"/><rect x="9.2" y="12.8" width="5.3" height="8.2" fill="#dce9f5"/></g><g transform="translate(27.80,760.90)" ><rect x="0.9" y="0.9" width="21.6" height="16.3" rx="3" fill="none" stroke="#8b3590" stroke-width="1.8" stroke-linecap="round" stroke-linejoin="round"/><path d="M1 4 H22.4" fill="none" stroke="#8b3590" stroke-width="1.3" stroke-linecap="butt" stroke-linejoin="round"/><rect x="4.3" y="11.6" width="14.6" height="3.3" rx="1" fill="#8b3590"/></g><g transform="translate(31.80,814.00)" ><path d="M2.8 0 H8.4 V6 a2.4 2.4 0 0 0 2.4 2.4 H17 V18.5 a2.8 2.8 0 0 1 -2.8 2.8 H2.8 a2.8 2.8 0 0 1 -2.8 -2.8 V2.8 a2.8 2.8 0 0 1 2.8 -2.8 Z" fill="#8b3590"/><path d="M10 0.3 L16.7 7 H11.2 a1.2 1.2 0 0 1 -1.2 -1.2 Z" fill="#8b3590"/></g><circle cx="39.8" cy="878" r="9.9" fill="#8b3590"/><path d="M39.8 873.4 V882.2 M36.0 878.6 L39.8 882.4 L43.599999999999994 878.6" fill="none" stroke="#ffffff" stroke-width="1.7" stroke-linecap="round" stroke-linejoin="round"/><g transform="translate(26.00,969.60)" ><path d="M1 1 L8.60 8.20 L16.20 1" fill="none" stroke="#222" stroke-width="2.0" stroke-linecap="round" stroke-linejoin="round"/></g><g transform="translate(64.20,962.50)" ><rect x="1.0" y="1.0" width="27.70" height="21.00" rx="3.60" fill="none" stroke="#ff7f1f" stroke-width="2.0" stroke-linecap="round" stroke-linejoin="round"/><path d="M1 7.67 H28.70 M1 15.33 H28.70" fill="none" stroke="#ff7f1f" stroke-width="1.7" stroke-linecap="butt" stroke-linejoin="round"/><circle cx="23.70" cy="4.13" r="1.45" fill="#ff7f1f"/><circle cx="23.70" cy="11.50" r="1.45" fill="#ff7f1f"/><circle cx="23.70" cy="18.87" r="1.45" fill="#ff7f1f"/></g><g transform="translate(26.00,1253.60)" ><path d="M1 1 L8.60 8.20 L16.20 1" fill="none" stroke="#222" stroke-width="2.0" stroke-linecap="round" stroke-linejoin="round"/></g><g transform="translate(64.00,1245.60)" ><path d="M1.15 4.39 a3.25 3.25 0 0 1 3.25 -3.25 H9.36 a2.39 2.39 0 0 1 1.72 0.76 L12.32 3.25 a2.39 2.39 0 0 0 1.72 0.76 H25.21 a3.25 3.25 0 0 1 3.25 3.25 V19.01 a3.25 3.25 0 0 1 -3.25 3.25 H4.39 a3.25 3.25 0 0 1 -3.25 -3.25 Z" fill="none" stroke="#ff7f1f" stroke-width="2.0" stroke-linecap="round" stroke-linejoin="round"/><path d="M1.53 7.93 H28.07" fill="none" stroke="#ff7f1f" stroke-width="1.7" stroke-linecap="butt" stroke-linejoin="round"/></g><g transform="translate(26.00,1429.60)" ><path d="M1 1 L8.60 8.20 L16.20 1" fill="none" stroke="#222" stroke-width="2.0" stroke-linecap="round" stroke-linejoin="round"/></g><g transform="translate(64.00,1421.60)" ><path d="M1.15 4.39 a3.25 3.25 0 0 1 3.25 -3.25 H9.36 a2.39 2.39 0 0 1 1.72 0.76 L12.32 3.25 a2.39 2.39 0 0 0 1.72 0.76 H25.21 a3.25 3.25 0 0 1 3.25 3.25 V19.01 a3.25 3.25 0 0 1 -3.25 3.25 H4.39 a3.25 3.25 0 0 1 -3.25 -3.25 Z" fill="none" stroke="#ff7f1f" stroke-width="2.0" stroke-linecap="round" stroke-linejoin="round"/><path d="M1.53 7.93 H28.07" fill="none" stroke="#ff7f1f" stroke-width="1.7" stroke-linecap="butt" stroke-linejoin="round"/></g><g transform="translate(68.00,1025.00)" ><rect x="0.8" y="0.8" width="21.60" height="16.40" rx="2.81" fill="none" stroke="#0a7aff" stroke-width="1.6" stroke-linecap="round" stroke-linejoin="round"/><path d="M1 6.00 H22.20 M1 12.00 H22.20" fill="none" stroke="#0a7aff" stroke-width="1.36" stroke-linecap="butt" stroke-linejoin="round"/><circle cx="18.51" cy="3.30" r="1.13" fill="#0a7aff"/><circle cx="18.51" cy="9.00" r="1.13" fill="#0a7aff"/><circle cx="18.51" cy="14.70" r="1.13" fill="#0a7aff"/></g><g transform="translate(69.90,1077.40)" ><path d="M1.2 10.2 L4.4 2.2 a2.4 2.4 0 0 1 2.2 -1.4 H14.4 a2.4 2.4 0 0 1 2.2 1.4 L19.8 10.2" fill="none" stroke="#0a7aff" stroke-width="1.6" stroke-linecap="round" stroke-linejoin="round"/><rect x="0.8" y="7.2" width="19.4" height="7.2" rx="3.6" fill="none" stroke="#0a7aff" stroke-width="1.6" stroke-linecap="round" stroke-linejoin="round"/><circle cx="16.4" cy="10.8" r="1.2" fill="#0a7aff"/><path d="M10.5 14.6 V19.4 M1.8 19.4 H19.2" fill="none" stroke="#0a7aff" stroke-width="1.6" stroke-linecap="round" stroke-linejoin="round"/><circle cx="10.5" cy="19.4" r="2.2" fill="#0a7aff"/></g><g transform="translate(69.90,1131.40)" ><path d="M1.2 10.2 L4.4 2.2 a2.4 2.4 0 0 1 2.2 -1.4 H14.4 a2.4 2.4 0 0 1 2.2 1.4 L19.8 10.2" fill="none" stroke="#0a7aff" stroke-width="1.6" stroke-linecap="round" stroke-linejoin="round"/><rect x="0.8" y="7.2" width="19.4" height="7.2" rx="3.6" fill="none" stroke="#0a7aff" stroke-width="1.6" stroke-linecap="round" stroke-linejoin="round"/><circle cx="16.4" cy="10.8" r="1.2" fill="#0a7aff"/><path d="M10.5 14.6 V19.4 M1.8 19.4 H19.2" fill="none" stroke="#0a7aff" stroke-width="1.6" stroke-linecap="round" stroke-linejoin="round"/><circle cx="10.5" cy="19.4" r="2.2" fill="#0a7aff"/></g><g transform="translate(69.90,1185.40)" ><path d="M1.2 10.2 L4.4 2.2 a2.4 2.4 0 0 1 2.2 -1.4 H14.4 a2.4 2.4 0 0 1 2.2 1.4 L19.8 10.2" fill="none" stroke="#22b8c8" stroke-width="1.6" stroke-linecap="round" stroke-linejoin="round"/><rect x="0.8" y="7.2" width="19.4" height="7.2" rx="3.6" fill="none" stroke="#22b8c8" stroke-width="1.6" stroke-linecap="round" stroke-linejoin="round"/><circle cx="16.4" cy="10.8" r="1.2" fill="#22b8c8"/><path d="M10.5 14.6 V19.4 M1.8 19.4 H19.2" fill="none" stroke="#22b8c8" stroke-width="1.6" stroke-linecap="round" stroke-linejoin="round"/><circle cx="10.5" cy="19.4" r="2.2" fill="#22b8c8"/></g><g transform="translate(68.20,1309.00)" ><path d="M0 3.29 a3.29 3.29 0 0 1 3.29 -3.29 H7.19 a2.46 2.46 0 0 1 1.85 0.82 L10.27 2.05 a2.46 2.46 0 0 0 1.85 0.82 H19.51 a3.29 3.29 0 0 1 3.29 3.29 V15.41 a3.29 3.29 0 0 1 -3.29 3.29 H3.29 a3.29 3.29 0 0 1 -3.29 -3.29 Z" fill="#8b3590"/><path d="M1.85 5.03 H20.95" stroke="#ffffff" stroke-opacity="0.8" stroke-width="1.18" stroke-linecap="round"/></g><g transform="translate(68.20,1362.60)" ><path d="M0 3.29 a3.29 3.29 0 0 1 3.29 -3.29 H7.19 a2.46 2.46 0 0 1 1.85 0.82 L10.27 2.05 a2.46 2.46 0 0 0 1.85 0.82 H19.51 a3.29 3.29 0 0 1 3.29 3.29 V15.41 a3.29 3.29 0 0 1 -3.29 3.29 H3.29 a3.29 3.29 0 0 1 -3.29 -3.29 Z" fill="#8b3590"/><path d="M1.85 5.03 H20.95" stroke="#ffffff" stroke-opacity="0.8" stroke-width="1.18" stroke-linecap="round"/></g><g transform="translate(68.00,1485.20)" ><rect x="0.8" y="0.8" width="21.60" height="16.40" rx="2.81" fill="none" stroke="#a03fa6" stroke-width="1.6" stroke-linecap="round" stroke-linejoin="round"/><path d="M1 6.00 H22.20 M1 12.00 H22.20" fill="none" stroke="#a03fa6" stroke-width="1.36" stroke-linecap="butt" stroke-linejoin="round"/><circle cx="18.51" cy="3.30" r="1.13" fill="#a03fa6"/><circle cx="18.51" cy="9.00" r="1.13" fill="#a03fa6"/><circle cx="18.51" cy="14.70" r="1.13" fill="#a03fa6"/></g><g transform="translate(68.00,1539.00)" ><rect x="0.8" y="0.8" width="21.60" height="16.40" rx="2.81" fill="none" stroke="#a03fa6" stroke-width="1.6" stroke-linecap="round" stroke-linejoin="round"/><path d="M1 6.00 H22.20 M1 12.00 H22.20" fill="none" stroke="#a03fa6" stroke-width="1.36" stroke-linecap="butt" stroke-linejoin="round"/><circle cx="18.51" cy="3.30" r="1.13" fill="#a03fa6"/><circle cx="18.51" cy="9.00" r="1.13" fill="#a03fa6"/><circle cx="18.51" cy="14.70" r="1.13" fill="#a03fa6"/></g><g transform="translate(68.00,1592.80)" ><rect x="0.8" y="0.8" width="21.60" height="16.40" rx="2.81" fill="none" stroke="#a03fa6" stroke-width="1.6" stroke-linecap="round" stroke-linejoin="round"/><path d="M1 6.00 H22.20 M1 12.00 H22.20" fill="none" stroke="#a03fa6" stroke-width="1.36" stroke-linecap="butt" stroke-linejoin="round"/><circle cx="18.51" cy="3.30" r="1.13" fill="#a03fa6"/><circle cx="18.51" cy="9.00" r="1.13" fill="#a03fa6"/><circle cx="18.51" cy="14.70" r="1.13" fill="#a03fa6"/></g><g transform="translate(68.00,1646.60)" ><rect x="0.8" y="0.8" width="21.60" height="16.40" rx="2.81" fill="none" stroke="#a03fa6" stroke-width="1.6" stroke-linecap="round" stroke-linejoin="round"/><path d="M1 6.00 H22.20 M1 12.00 H22.20" fill="none" stroke="#a03fa6" stroke-width="1.36" stroke-linecap="butt" stroke-linejoin="round"/><circle cx="18.51" cy="3.30" r="1.13" fill="#a03fa6"/><circle cx="18.51" cy="9.00" r="1.13" fill="#a03fa6"/><circle cx="18.51" cy="14.70" r="1.13" fill="#a03fa6"/></g></svg>
<div style="position:absolute;left:502px;top:152px;width:1188px;height:60px;background:linear-gradient(#a9bdce,#b4c7d8 30%,#c9daea 85%,#cddeee);"></div>
<div style="position:absolute;left:1692px;top:152px;width:1188px;height:60px;background:linear-gradient(#a9bdce,#b4c7d8 30%,#c9daea 85%,#cddeee);"></div>
<div style="position:absolute;left:502px;top:210px;width:1188px;height:2px;background:#b7d3ed;"></div>
<div style="position:absolute;left:1690px;top:152px;width:2px;height:1528px;background:#050505;"></div>
<div style="position:absolute;left:509px;top:158px;width:191px;height:48px;background:#f1f6fc;border-radius:11px;box-sizing:border-box;border:1.8px solid #80a8d0;overflow:hidden;"></div>
<div style="position:absolute;left:526px;top:158px;width:158px;height:4.2px;background:#0a4a8f;border-radius:0 0 3px 3px;"></div>
<span class="t s b" style="left:565.00px;top:170.53px;font-size:23px;color:#101c35;font-weight:bold;letter-spacing:-0.353px;">images</span>
<div style="position:absolute;left:652px;top:168px;width:28px;height:28px;background:#dbe3ea;border-radius:50%;"></div>
<span class="t s" style="left:758.00px;top:170.53px;font-size:23px;color:#2f4f6e;letter-spacing:-0.171px;">ServerFiles</span>
<span class="t s" style="left:988.00px;top:170.53px;font-size:23px;color:#2f4f6e;letter-spacing:0.158px;">Flowistry</span>
<span class="t s" style="left:1195.50px;top:170.53px;font-size:23px;color:#2f4f6e;letter-spacing:0.088px;">Downloads</span>
<span class="t s" style="left:1424.00px;top:170.53px;font-size:23px;color:#2f4f6e;letter-spacing:0.355px;">appstore</span>
<div style="position:absolute;left:1630px;top:158px;width:48px;height:48px;background:rgba(226,238,248,.30);border-radius:9px;"></div>
<div style="position:absolute;left:2272px;top:158px;width:356px;height:48px;background:#f0f6fc;border-radius:11px;"></div>
<span class="t s b" style="left:2326.00px;top:170.53px;font-size:23px;color:#101c35;font-weight:bold;letter-spacing:0.582px;">apache-tomcat-8.0.32</span>
<div style="position:absolute;left:2581px;top:168px;width:28px;height:28px;background:#dbe3ea;border-radius:50%;"></div>
<span class="t s" style="left:1755.50px;top:170.53px;font-size:23px;color:#2f4f6e;letter-spacing:-0.164px;">admin</span>
<span class="t s" style="left:1932.40px;top:170.53px;font-size:23px;color:#2f4f6e;letter-spacing:0.073px;">Storage</span>
<span class="t s" style="left:2128.80px;top:170.53px;font-size:23px;color:#2f4f6e;letter-spacing:0.190px;">updates</span>
<span class="t s" style="left:2686.50px;top:170.53px;font-size:23px;color:#2f4f6e;letter-spacing:0.020px;">Xcode</span>
<div style="position:absolute;left:2820px;top:158px;width:48px;height:48px;background:rgba(226,238,248,.30);border-radius:9px;"></div>
<svg class="ov" width="2880" height="215" viewBox="0 0 2880 215"><g transform="translate(531.80,173.00)" ><path d="M0 3.20 a3.20 3.20 0 0 1 3.20 -3.20 H7.00 a2.40 2.40 0 0 1 1.80 0.80 L10.00 2.00 a2.40 2.40 0 0 0 1.80 0.80 H19.00 a3.20 3.20 0 0 1 3.20 3.20 V15.00 a3.20 3.20 0 0 1 -3.20 3.20 H3.20 a3.20 3.20 0 0 1 -3.20 -3.20 Z" fill="#0a4a8f"/><path d="M1.80 4.90 H20.40" stroke="#ffffff" stroke-opacity="0.8" stroke-width="1.15" stroke-linecap="round"/></g><g transform="translate(724.00,173.00)" ><path d="M0 3.20 a3.20 3.20 0 0 1 3.20 -3.20 H7.00 a2.40 2.40 0 0 1 1.80 0.80 L10.00 2.00 a2.40 2.40 0 0 0 1.80 0.80 H19.00 a3.20 3.20 0 0 1 3.20 3.20 V15.00 a3.20 3.20 0 0 1 -3.20 3.20 H3.20 a3.20 3.20 0 0 1 -3.20 -3.20 Z" fill="#3b6ea3"/><path d="M1.80 4.90 H20.40" stroke="#ffffff" stroke-opacity="0.8" stroke-width="1.15" stroke-linecap="round"/></g><g transform="translate(953.80,173.00)" ><path d="M0 3.20 a3.20 3.20 0 0 1 3.20 -3.20 H7.00 a2.40 2.40 0 0 1 1.80 0.80 L10.00 2.00 a2.40 2.40 0 0 0 1.80 0.80 H19.00 a3.20 3.20 0 0 1 3.20 3.20 V15.00 a3.20 3.20 0 0 1 -3.20 3.20 H3.20 a3.20 3.20 0 0 1 -3.20 -3.20 Z" fill="#2dc84f"/><path d="M1.80 4.90 H20.40" stroke="#ffffff" stroke-opacity="0.8" stroke-width="1.15" stroke-linecap="round"/></g><g transform="translate(1162.00,173.00)" ><path d="M0 3.20 a3.20 3.20 0 0 1 3.20 -3.20 H7.00 a2.40 2.40 0 0 1 1.80 0.80 L10.00 2.00 a2.40 2.40 0 0 0 1.80 0.80 H19.00 a3.20 3.20 0 0 1 3.20 3.20 V15.00 a3.20 3.20 0 0 1 -3.20 3.20 H3.20 a3.20 3.20 0 0 1 -3.20 -3.20 Z" fill="#3b6ea3"/><path d="M1.80 4.90 H20.40" stroke="#ffffff" stroke-opacity="0.8" stroke-width="1.15" stroke-linecap="round"/></g><g transform="translate(1390.80,173.00)" ><path d="M0 3.20 a3.20 3.20 0 0 1 3.20 -3.20 H7.00 a2.40 2.40 0 0 1 1.80 0.80 L10.00 2.00 a2.40 2.40 0 0 0 1.80 0.80 H19.00 a3.20 3.20 0 0 1 3.20 3.20 V15.00 a3.20 3.20 0 0 1 -3.20 3.20 H3.20 a3.20 3.20 0 0 1 -3.20 -3.20 Z" fill="#3b6ea3"/><path d="M1.80 4.90 H20.40" stroke="#ffffff" stroke-opacity="0.8" stroke-width="1.15" stroke-linecap="round"/></g><svg x="1596.6" y="173" width="5.6" height="19" viewBox="0 0 5.6 19"><g transform="translate(0.00,0.00)" ><path d="M0 3.20 a3.20 3.20 0 0 1 3.20 -3.20 H7.00 a2.40 2.40 0 0 1 1.80 0.80 L10.00 2.00 a2.40 2.40 0 0 0 1.80 0.80 H19.00 a3.20 3.20 0 0 1 3.20 3.20 V15.00 a3.20 3.20 0 0 1 -3.20 3.20 H3.20 a3.20 3.20 0 0 1 -3.20 -3.20 Z" fill="#3b6ea3"/><path d="M1.80 4.90 H20.40" stroke="#ffffff" stroke-opacity="0.8" stroke-width="1.15" stroke-linecap="round"/></g></svg><g transform="translate(1722.00,173.00)" ><path d="M0 3.20 a3.20 3.20 0 0 1 3.20 -3.20 H7.00 a2.40 2.40 0 0 1 1.80 0.80 L10.00 2.00 a2.40 2.40 0 0 0 1.80 0.80 H19.00 a3.20 3.20 0 0 1 3.20 3.20 V15.00 a3.20 3.20 0 0 1 -3.20 3.20 H3.20 a3.20 3.20 0 0 1 -3.20 -3.20 Z" fill="#3b6ea3"/><path d="M1.80 4.90 H20.40" stroke="#ffffff" stroke-opacity="0.8" stroke-width="1.15" stroke-linecap="round"/></g><g transform="translate(1899.00,173.00)" ><path d="M0 3.20 a3.20 3.20 0 0 1 3.20 -3.20 H7.00 a2.40 2.40 0 0 1 1.80 0.80 L10.00 2.00 a2.40 2.40 0 0 0 1.80 0.80 H19.00 a3.20 3.20 0 0 1 3.20 3.20 V15.00 a3.20 3.20 0 0 1 -3.20 3.20 H3.20 a3.20 3.20 0 0 1 -3.20 -3.20 Z" fill="#1e8bff"/><path d="M1.80 4.90 H20.40" stroke="#ffffff" stroke-opacity="0.8" stroke-width="1.15" stroke-linecap="round"/></g><g transform="translate(2094.40,173.00)" ><path d="M0 3.20 a3.20 3.20 0 0 1 3.20 -3.20 H7.00 a2.40 2.40 0 0 1 1.80 0.80 L10.00 2.00 a2.40 2.40 0 0 0 1.80 0.80 H19.00 a3.20 3.20 0 0 1 3.20 3.20 V15.00 a3.20 3.20 0 0 1 -3.20 3.20 H3.20 a3.20 3.20 0 0 1 -3.20 -3.20 Z" fill="#3b6ea3"/><path d="M1.80 4.90 H20.40" stroke="#ffffff" stroke-opacity="0.8" stroke-width="1.15" stroke-linecap="round"/></g><g transform="translate(2292.90,173.00)" ><path d="M0 3.20 a3.20 3.20 0 0 1 3.20 -3.20 H7.00 a2.40 2.40 0 0 1 1.80 0.80 L10.00 2.00 a2.40 2.40 0 0 0 1.80 0.80 H19.00 a3.20 3.20 0 0 1 3.20 3.20 V15.00 a3.20 3.20 0 0 1 -3.20 3.20 H3.20 a3.20 3.20 0 0 1 -3.20 -3.20 Z" fill="#0a4a8f"/><path d="M1.80 4.90 H20.40" stroke="#ffffff" stroke-opacity="0.8" stroke-width="1.15" stroke-linecap="round"/></g><g transform="translate(2653.30,173.00)" ><path d="M0 3.20 a3.20 3.20 0 0 1 3.20 -3.20 H7.00 a2.40 2.40 0 0 1 1.80 0.80 L10.00 2.00 a2.40 2.40 0 0 0 1.80 0.80 H19.00 a3.20 3.20 0 0 1 3.20 3.20 V15.00 a3.20 3.20 0 0 1 -3.20 3.20 H3.20 a3.20 3.20 0 0 1 -3.20 -3.20 Z" fill="#3b6ea3"/><path d="M1.80 4.90 H20.40" stroke="#ffffff" stroke-opacity="0.8" stroke-width="1.15" stroke-linecap="round"/></g><path d="M661 177 L671 187 M671 177 L661 187" fill="none" stroke="#34506e" stroke-width="2.1" stroke-linecap="round" stroke-linejoin="round"/><path d="M2590 177 L2600 187 M2600 177 L2590 187" fill="none" stroke="#34506e" stroke-width="2.1" stroke-linecap="round" stroke-linejoin="round"/><path d="M1645 182 H1663 M1654 173 V191" fill="none" stroke="#34506e" stroke-width="2.2" stroke-linecap="butt" stroke-linejoin="round"/><path d="M2835 182 H2853 M2844 173 V191" fill="none" stroke="#34506e" stroke-width="2.2" stroke-linecap="butt" stroke-linejoin="round"/></svg>
<div style="position:absolute;left:502px;top:212px;width:1188px;height:1468px;background:#f0f7fe;"></div>
<div style="position:absolute;left:506px;top:216px;width:1180px;height:48px;background:#d9e9f7;"></div>
<div style="position:absolute;left:506px;top:264px;width:1180px;height:44px;background:#cbe0f1;"></div>
<div style="position:absolute;left:506px;top:308px;width:1180px;height:44px;background:#8fbfe8;"></div>
<span class="t m b" style="left:566.50px;top:318.48px;font-size:24px;color:#0f1a33;font-weight:bold;">..</span>
<span class="t m" style="left:1279.35px;top:318.48px;font-size:24px;color:#2d4a68;">&lt;DIR&gt;</span>
<span class="t m" style="left:1376.60px;top:318.48px;font-size:24px;color:#2d4a68;">06.02.2026 12:21</span>
<div style="position:absolute;left:506px;top:352px;width:1180px;height:44px;background:#e3eff9;"></div>
<span class="t m b" style="left:566.50px;top:362.48px;font-size:24px;color:#0a3e82;font-weight:bold;">appstore</span>
<span class="t m" style="left:1279.35px;top:362.48px;font-size:24px;color:#2d4a68;">&lt;DIR&gt;</span>
<span class="t m" style="left:1376.60px;top:362.48px;font-size:24px;color:#2d4a68;">04.02.2026 19:44</span>
<span class="t m b" style="left:566.50px;top:406.48px;font-size:24px;color:#0a3e82;font-weight:bold;">dark</span>
<span class="t m" style="left:1279.35px;top:406.48px;font-size:24px;color:#2d4a68;">&lt;DIR&gt;</span>
<span class="t m" style="left:1376.60px;top:406.48px;font-size:24px;color:#2d4a68;">01.02.2026 13:43</span>
<div style="position:absolute;left:506px;top:440px;width:1180px;height:44px;background:#e3eff9;"></div>
<span class="t m" style="left:566.50px;top:450.48px;font-size:24px;color:#6b7a8c;">.DS_Store</span>
<span class="t m" style="left:1293.80px;top:450.48px;font-size:24px;color:#2d4a68;">8 KB</span>
<span class="t m" style="left:1376.60px;top:450.48px;font-size:24px;color:#2d4a68;">04.02.2026 19:46</span>
<span class="t m" style="left:566.50px;top:494.48px;font-size:24px;color:#0e696f;">Download_on_the_Mac_App_Store_Badge_DE_RGB…</span>
<span class="t m" style="left:1279.35px;top:494.48px;font-size:24px;color:#2d4a68;">10 KB</span>
<span class="t m" style="left:1376.60px;top:494.48px;font-size:24px;color:#2d4a68;">01.02.2026 13:57</span>
<div style="position:absolute;left:506px;top:528px;width:1180px;height:44px;background:#e3eff9;"></div>
<span class="t m" style="left:566.50px;top:538.48px;font-size:24px;color:#0e696f;">Download_on_the_Mac_App_Store_Badge_US-UK_…</span>
<span class="t m" style="left:1279.35px;top:538.48px;font-size:24px;color:#2d4a68;">12 KB</span>
<span class="t m" style="left:1376.60px;top:538.48px;font-size:24px;color:#2d4a68;">01.02.2026 13:57</span>
<span class="t m" style="left:566.50px;top:582.48px;font-size:24px;color:#0e696f;">intro-1_get-started.png</span>
<span class="t m" style="left:1264.90px;top:582.48px;font-size:24px;color:#2d4a68;">109 KB</span>
<span class="t m" style="left:1376.60px;top:582.48px;font-size:24px;color:#2d4a68;">31.01.2026 16:34</span>
<div style="position:absolute;left:506px;top:616px;width:1180px;height:44px;background:#e3eff9;"></div>
<span class="t m" style="left:566.50px;top:626.48px;font-size:24px;color:#0e696f;">intro-2_how-workflows-work.png</span>
<span class="t m" style="left:1264.90px;top:626.48px;font-size:24px;color:#2d4a68;">149 KB</span>
<span class="t m" style="left:1376.60px;top:626.48px;font-size:24px;color:#2d4a68;">31.01.2026 16:47</span>
<span class="t m" style="left:566.50px;top:670.48px;font-size:24px;color:#0e696f;">intro-3_triggers.png</span>
<span class="t m" style="left:1279.35px;top:670.48px;font-size:24px;color:#2d4a68;">98 KB</span>
<span class="t m" style="left:1376.60px;top:670.48px;font-size:24px;color:#2d4a68;">31.01.2026 16:47</span>
<div style="position:absolute;left:506px;top:704px;width:1180px;height:44px;background:#e3eff9;"></div>
<span class="t m" style="left:566.50px;top:714.48px;font-size:24px;color:#0e696f;">intro-4_actions-chains.png</span>
<span class="t m" style="left:1264.90px;top:714.48px;font-size:24px;color:#2d4a68;">101 KB</span>
<span class="t m" style="left:1376.60px;top:714.48px;font-size:24px;color:#2d4a68;">31.01.2026 16:48</span>
<span class="t m" style="left:566.50px;top:758.48px;font-size:24px;color:#0e696f;">mainwindow-empty-start-a-new-workflow.png</span>
<span class="t m" style="left:1264.90px;top:758.48px;font-size:24px;color:#2d4a68;">704 KB</span>
<span class="t m" style="left:1376.60px;top:758.48px;font-size:24px;color:#2d4a68;">31.01.2026 16:15</span>
<div style="position:absolute;left:506px;top:792px;width:1180px;height:44px;background:#e3eff9;"></div>
<span class="t m" style="left:566.50px;top:802.48px;font-size:24px;color:#0e696f;">mainwindow-with-workflows.png</span>
<span class="t m" style="left:1264.90px;top:802.48px;font-size:24px;color:#2d4a68;">803 KB</span>
<span class="t m" style="left:1376.60px;top:802.48px;font-size:24px;color:#2d4a68;">01.02.2026 09:58</span>
<span class="t m" style="left:566.50px;top:846.48px;font-size:24px;color:#0e696f;">settings-1-general.png</span>
<span class="t m" style="left:1264.90px;top:846.48px;font-size:24px;color:#2d4a68;">370 KB</span>
<span class="t m" style="left:1376.60px;top:846.48px;font-size:24px;color:#2d4a68;">01.02.2026 10:19</span>
<div style="position:absolute;left:506px;top:880px;width:1180px;height:44px;background:#e3eff9;"></div>
<span class="t m" style="left:566.50px;top:890.48px;font-size:24px;color:#0e696f;">settings-2-connections-sftp-ftp-smtp.png</span>
<span class="t m" style="left:1264.90px;top:890.48px;font-size:24px;color:#2d4a68;">341 KB</span>
<span class="t m" style="left:1376.60px;top:890.48px;font-size:24px;color:#2d4a68;">01.02.2026 10:19</span>
<span class="t m" style="left:566.50px;top:934.48px;font-size:24px;color:#0e696f;">settings-2-connectsions-sftp-ftp-smtp.png</span>
<span class="t m" style="left:1264.90px;top:934.48px;font-size:24px;color:#2d4a68;">342 KB</span>
<span class="t m" style="left:1376.60px;top:934.48px;font-size:24px;color:#2d4a68;">01.02.2026 10:07</span>
<div style="position:absolute;left:506px;top:968px;width:1180px;height:44px;background:#e3eff9;"></div>
<span class="t m" style="left:566.50px;top:978.48px;font-size:24px;color:#0e696f;">settings-3-monitoring.png</span>
<span class="t m" style="left:1264.90px;top:978.48px;font-size:24px;color:#2d4a68;">392 KB</span>
<span class="t m" style="left:1376.60px;top:978.48px;font-size:24px;color:#2d4a68;">01.02.2026 10:19</span>
<span class="t m" style="left:566.50px;top:1022.48px;font-size:24px;color:#0e696f;">settings-4-trash.png</span>
<span class="t m" style="left:1264.90px;top:1022.48px;font-size:24px;color:#2d4a68;">367 KB</span>
<span class="t m" style="left:1376.60px;top:1022.48px;font-size:24px;color:#2d4a68;">01.02.2026 10:19</span>
<div style="position:absolute;left:506px;top:1056px;width:1180px;height:44px;background:#e3eff9;"></div>
<span class="t m" style="left:566.50px;top:1066.48px;font-size:24px;color:#0e696f;">settings-5-app-sweep.png</span>
<span class="t m" style="left:1264.90px;top:1066.48px;font-size:24px;color:#2d4a68;">362 KB</span>
<span class="t m" style="left:1376.60px;top:1066.48px;font-size:24px;color:#2d4a68;">01.02.2026 10:19</span>
<span class="t m" style="left:566.50px;top:1110.48px;font-size:24px;color:#0e696f;">settings-6-notifications.png</span>
<span class="t m" style="left:1264.90px;top:1110.48px;font-size:24px;color:#2d4a68;">397 KB</span>
<span class="t m" style="left:1376.60px;top:1110.48px;font-size:24px;color:#2d4a68;">01.02.2026 10:19</span>
<div style="position:absolute;left:506px;top:1144px;width:1180px;height:44px;background:#e3eff9;"></div>
<span class="t m" style="left:566.50px;top:1154.48px;font-size:24px;color:#0e696f;">settings-7-language.png</span>
<span class="t m" style="left:1264.90px;top:1154.48px;font-size:24px;color:#2d4a68;">340 KB</span>
<span class="t m" style="left:1376.60px;top:1154.48px;font-size:24px;color:#2d4a68;">01.02.2026 10:19</span>
<span class="t m" style="left:566.50px;top:1198.48px;font-size:24px;color:#0e696f;">workflow-after-assistant-1.png</span>
<span class="t m" style="left:1264.90px;top:1198.48px;font-size:24px;color:#2d4a68;">773 KB</span>
<span class="t m" style="left:1376.60px;top:1198.48px;font-size:24px;color:#2d4a68;">01.02.2026 09:22</span>
<div style="position:absolute;left:506px;top:1232px;width:1180px;height:44px;background:#e3eff9;"></div>
<span class="t m" style="left:566.50px;top:1242.48px;font-size:24px;color:#0e696f;">workflow-after-assistant-2-add-description…</span>
<span class="t m" style="left:1264.90px;top:1242.48px;font-size:24px;color:#2d4a68;">842 KB</span>
<span class="t m" style="left:1376.60px;top:1242.48px;font-size:24px;color:#2d4a68;">01.02.2026 09:29</span>
<span class="t m" style="left:566.50px;top:1286.48px;font-size:24px;color:#0e696f;">workflow-after-assistant-3-activate-run-se…</span>
<span class="t m" style="left:1264.90px;top:1286.48px;font-size:24px;color:#2d4a68;">831 KB</span>
<span class="t m" style="left:1376.60px;top:1286.48px;font-size:24px;color:#2d4a68;">01.02.2026 09:42</span>
<div style="position:absolute;left:506px;top:1320px;width:1180px;height:44px;background:#e3eff9;"></div>
<span class="t m" style="left:566.50px;top:1330.48px;font-size:24px;color:#0e696f;">workflow-assistant-1-start.png</span>
<span class="t m" style="left:1264.90px;top:1330.48px;font-size:24px;color:#2d4a68;">141 KB</span>
<span class="t m" style="left:1376.60px;top:1330.48px;font-size:24px;color:#2d4a68;">01.02.2026 09:17</span>
<span class="t m" style="left:566.50px;top:1374.48px;font-size:24px;color:#0e696f;">workflow-assistant-2-trigger.png</span>
<span class="t m" style="left:1264.90px;top:1374.48px;font-size:24px;color:#2d4a68;">184 KB</span>
<span class="t m" style="left:1376.60px;top:1374.48px;font-size:24px;color:#2d4a68;">01.02.2026 09:18</span>
<div style="position:absolute;left:506px;top:1408px;width:1180px;height:44px;background:#e3eff9;"></div>
<span class="t m" style="left:566.50px;top:1418.48px;font-size:24px;color:#0e696f;">workflow-assistant-3-action.png</span>
<span class="t m" style="left:1264.90px;top:1418.48px;font-size:24px;color:#2d4a68;">126 KB</span>
<span class="t m" style="left:1376.60px;top:1418.48px;font-size:24px;color:#2d4a68;">01.02.2026 09:19</span>
<span class="t m" style="left:566.50px;top:1462.48px;font-size:24px;color:#0e696f;">workflow-assistant-4-validation.png</span>
<span class="t m" style="left:1264.90px;top:1462.48px;font-size:24px;color:#2d4a68;">134 KB</span>
<span class="t m" style="left:1376.60px;top:1462.48px;font-size:24px;color:#2d4a68;">01.02.2026 09:20</span>
<div style="position:absolute;left:506px;top:1496px;width:1180px;height:44px;background:#e3eff9;"></div>
<span class="t m" style="left:566.50px;top:1506.48px;font-size:24px;color:#0e696f;">workflow-assistant-5-finish.png</span>
<span class="t m" style="left:1264.90px;top:1506.48px;font-size:24px;color:#2d4a68;">137 KB</span>
<span class="t m" style="left:1376.60px;top:1506.48px;font-size:24px;color:#2d4a68;">01.02.2026 09:21</span>
<span class="t m" style="left:566.50px;top:1550.48px;font-size:24px;color:#0e696f;">workflow-designer-debug-workflow.png</span>
<span class="t m" style="left:1264.90px;top:1550.48px;font-size:24px;color:#2d4a68;">632 KB</span>
<span class="t m" style="left:1376.60px;top:1550.48px;font-size:24px;color:#2d4a68;">31.01.2026 18:16</span>
<div style="position:absolute;left:506px;top:1584px;width:1180px;height:44px;background:#e3eff9;"></div>
<span class="t m" style="left:566.50px;top:1594.48px;font-size:24px;color:#0e696f;">workflow-designer-test-workflow.png</span>
<span class="t m" style="left:1264.90px;top:1594.48px;font-size:24px;color:#2d4a68;">989 KB</span>
<span class="t m" style="left:1376.60px;top:1594.48px;font-size:24px;color:#2d4a68;">31.01.2026 18:12</span>
<div style="position:absolute;left:506px;top:1638px;width:1180px;height:38px;background:#eaf2fc;"></div>
<span class="t s b" style="left:567.00px;top:276.38px;font-size:22px;color:#101c35;font-weight:bold;letter-spacing:0.359px;">Name</span>
<span class="t s b" style="left:1289.50px;top:276.38px;font-size:22px;color:#101c35;font-weight:bold;letter-spacing:0.301px;">Größe</span>
<span class="t s b" style="left:1377.00px;top:276.38px;font-size:22px;color:#101c35;font-weight:bold;letter-spacing:0.387px;">Datum</span>
<div style="position:absolute;left:1197.8px;top:268px;width:1.6px;height:36px;background:#b3cde5;"></div>
<div style="position:absolute;left:1358.2px;top:268px;width:1.6px;height:36px;background:#b3cde5;"></div>
<div style="position:absolute;left:1658.2px;top:268px;width:1.6px;height:36px;background:#b3cde5;"></div>
<div style="position:absolute;left:502px;top:212px;width:1188px;height:1468px;box-sizing:border-box;border:4px solid #0a4a8f;"></div>
<div style="position:absolute;left:1692px;top:212px;width:1188px;height:1468px;background:#f0f7fe;"></div>
<div style="position:absolute;left:1694px;top:214px;width:1184px;height:50px;background:#d9e9f7;"></div>
<div style="position:absolute;left:1694px;top:264px;width:1184px;height:44px;background:#cbe0f1;"></div>
<span class="t m b" style="left:1756.50px;top:318.48px;font-size:24px;color:#0f1a33;font-weight:bold;">..</span>
<span class="t m" style="left:2469.35px;top:318.48px;font-size:24px;color:#2d4a68;">&lt;DIR&gt;</span>
<span class="t m" style="left:2566.60px;top:318.48px;font-size:24px;color:#2d4a68;">06.02.2026 12:21</span>
<div style="position:absolute;left:1694px;top:352px;width:1184px;height:44px;background:#e3eff9;"></div>
<span class="t m b" style="left:1756.50px;top:362.48px;font-size:24px;color:#0a3e82;font-weight:bold;">bin</span>
<span class="t m" style="left:2469.35px;top:362.48px;font-size:24px;color:#2d4a68;">&lt;DIR&gt;</span>
<span class="t m" style="left:2566.60px;top:362.48px;font-size:24px;color:#2d4a68;">02.02.2016 19:38</span>
<span class="t m b" style="left:1756.50px;top:406.48px;font-size:24px;color:#0a3e82;font-weight:bold;">conf</span>
<span class="t m" style="left:2469.35px;top:406.48px;font-size:24px;color:#2d4a68;">&lt;DIR&gt;</span>
<span class="t m" style="left:2566.60px;top:406.48px;font-size:24px;color:#2d4a68;">28.02.2016 09:51</span>
<div style="position:absolute;left:1694px;top:440px;width:1184px;height:44px;background:#e3eff9;"></div>
<span class="t m b" style="left:1756.50px;top:450.48px;font-size:24px;color:#0a3e82;font-weight:bold;">lib</span>
<span class="t m" style="left:2469.35px;top:450.48px;font-size:24px;color:#2d4a68;">&lt;DIR&gt;</span>
<span class="t m" style="left:2566.60px;top:450.48px;font-size:24px;color:#2d4a68;">02.02.2016 19:38</span>
<span class="t m b" style="left:1756.50px;top:494.48px;font-size:24px;color:#0a3e82;font-weight:bold;">logs</span>
<span class="t m" style="left:2469.35px;top:494.48px;font-size:24px;color:#2d4a68;">&lt;DIR&gt;</span>
<span class="t m" style="left:2566.60px;top:494.48px;font-size:24px;color:#2d4a68;">28.02.2016 09:51</span>
<div style="position:absolute;left:1694px;top:528px;width:1184px;height:44px;background:#e3eff9;"></div>
<span class="t m b" style="left:1756.50px;top:538.48px;font-size:24px;color:#0a3e82;font-weight:bold;">temp</span>
<span class="t m" style="left:2469.35px;top:538.48px;font-size:24px;color:#2d4a68;">&lt;DIR&gt;</span>
<span class="t m" style="left:2566.60px;top:538.48px;font-size:24px;color:#2d4a68;">02.02.2016 19:38</span>
<span class="t m b" style="left:1756.50px;top:582.48px;font-size:24px;color:#0a3e82;font-weight:bold;">webapps</span>
<span class="t m" style="left:2469.35px;top:582.48px;font-size:24px;color:#2d4a68;">&lt;DIR&gt;</span>
<span class="t m" style="left:2566.60px;top:582.48px;font-size:24px;color:#2d4a68;">28.02.2016 16:28</span>
<div style="position:absolute;left:1694px;top:616px;width:1184px;height:44px;background:#e3eff9;"></div>
<span class="t m b" style="left:1756.50px;top:626.48px;font-size:24px;color:#0a3e82;font-weight:bold;">work</span>
<span class="t m" style="left:2469.35px;top:626.48px;font-size:24px;color:#2d4a68;">&lt;DIR&gt;</span>
<span class="t m" style="left:2566.60px;top:626.48px;font-size:24px;color:#2d4a68;">28.02.2016 09:51</span>
<span class="t m" style="left:1756.50px;top:670.48px;font-size:24px;color:#0f1a33;">LICENSE</span>
<span class="t m" style="left:2469.35px;top:670.48px;font-size:24px;color:#2d4a68;">58 KB</span>
<span class="t m" style="left:2566.60px;top:670.48px;font-size:24px;color:#2d4a68;">02.02.2016 19:38</span>
<div style="position:absolute;left:1694px;top:704px;width:1184px;height:44px;background:#e3eff9;"></div>
<span class="t m" style="left:1755.00px;top:714.48px;font-size:24px;color:#0f1a33;">NOTICE</span>
<span class="t m" style="left:2483.80px;top:714.48px;font-size:24px;color:#2d4a68;">1 KB</span>
<span class="t m" style="left:2566.60px;top:714.48px;font-size:24px;color:#2d4a68;">02.02.2016 19:38</span>
<span class="t m" style="left:1756.50px;top:758.48px;font-size:24px;color:#0f1a33;">RELEASE-NOTES</span>
<span class="t m" style="left:2483.80px;top:758.48px;font-size:24px;color:#2d4a68;">7 KB</span>
<span class="t m" style="left:2566.60px;top:758.48px;font-size:24px;color:#2d4a68;">02.02.2016 19:38</span>
<div style="position:absolute;left:1694px;top:792px;width:1184px;height:44px;background:#ccd8e1;"></div>
<span class="t m" style="left:1756.50px;top:802.48px;font-size:24px;color:#0f1a33;">RUNNING.txt</span>
<span class="t m" style="left:2469.35px;top:802.48px;font-size:24px;color:#2d4a68;">17 KB</span>
<span class="t m" style="left:2566.60px;top:802.48px;font-size:24px;color:#2d4a68;">02.02.2016 19:38</span>
<div style="position:absolute;left:1694px;top:1638px;width:1184px;height:40px;background:#eaf2fc;"></div>
<span class="t s b" style="left:1757.00px;top:276.38px;font-size:22px;color:#101c35;font-weight:bold;letter-spacing:0.359px;">Name</span>
<span class="t s b" style="left:2479.50px;top:276.38px;font-size:22px;color:#101c35;font-weight:bold;letter-spacing:0.301px;">Größe</span>
<span class="t s b" style="left:2567.00px;top:276.38px;font-size:22px;color:#101c35;font-weight:bold;letter-spacing:0.387px;">Datum</span>
<div style="position:absolute;left:2387.7999999999997px;top:268px;width:1.6px;height:36px;background:#b3cde5;"></div>
<div style="position:absolute;left:2548.2px;top:268px;width:1.6px;height:36px;background:#b3cde5;"></div>
<div style="position:absolute;left:2848.2px;top:268px;width:1.6px;height:36px;background:#b3cde5;"></div>
<div style="position:absolute;left:1692px;top:212px;width:1188px;height:1468px;box-sizing:border-box;border:2px solid #a7c8e6;"></div>
<span class="t m b" style="left:552.80px;top:225.49px;font-size:26px;color:#101c35;font-weight:bold;letter-spacing:-0.071px;">/Users/norbert/Projekte/Xcode/Flowistry/website/images</span>
<span class="t m b" style="left:1739.60px;top:225.49px;font-size:26px;color:#065a80;font-weight:bold;letter-spacing:-0.083px;">SFTP://192.168.200.7</span>
<span class="t m b" style="left:2057.20px;top:225.49px;font-size:26px;color:#101c35;font-weight:bold;letter-spacing:-0.085px;">/Users/norbert/apache-tomcat-8.0.32</span>
<span class="t s" style="left:511.00px;top:1648.22px;font-size:21px;color:#2d4a68;letter-spacing:0.269px;">38 Dateien</span>
<span class="t s" style="left:624.50px;top:1648.22px;font-size:21px;color:#2d4a68;">,</span>
<span class="t s" style="left:641.00px;top:1648.22px;font-size:21px;color:#2d4a68;letter-spacing:-0.054px;">2 Ordner</span>
<span class="t s" style="left:734.50px;top:1648.22px;font-size:21px;color:#5f7b96;letter-spacing:-0.400px;">(16,6 MB)</span>
<span class="t s" style="left:1102.50px;top:1648.22px;font-size:21px;color:#5f7b96;letter-spacing:0.311px;">453,63 GB frei auf Macintosh HD</span>
<span class="t s" style="left:1700.40px;top:1648.22px;font-size:21px;color:#2d4a68;letter-spacing:0.137px;">4 Dateien</span>
<span class="t s" style="left:1800.50px;top:1648.22px;font-size:21px;color:#2d4a68;">,</span>
<span class="t s" style="left:1817.00px;top:1648.22px;font-size:21px;color:#2d4a68;letter-spacing:-0.054px;">7 Ordner</span>
<span class="t s" style="left:1911.00px;top:1648.22px;font-size:21px;color:#5f7b96;letter-spacing:-0.367px;">(83 KB)</span>
<span class="t s" style="left:2812.98px;top:1648.22px;font-size:21px;color:#2d4a68;letter-spacing:0.200px;">17 KB</span>
<svg class="ov" width="2880" height="1638" viewBox="0 0 2880 1638"><g transform="translate(527.50,317.60)" ><defs><linearGradient id="fg1" x1="0" y1="0" x2="0" y2="1"><stop offset="0" stop-color="#74b7fd"/><stop offset="0.16" stop-color="#3d9bfc"/><stop offset="0.34" stop-color="#0f87fe"/><stop offset="1" stop-color="#0a79f1"/></linearGradient></defs><path d="M0.2 3 a2.8 2.8 0 0 1 2.8 -2.8 H9.6 a2.6 2.6 0 0 1 1.7 0.65 L13.2 2.5 a2.6 2.6 0 0 0 1.7 0.65 H26 a2.6 2.6 0 0 1 2.6 2.6 V10 H0.2 Z" fill="#0b78ee"/><path d="M0.2 8.6 a2.2 2.2 0 0 1 2.2 -2.2 H26.4 a2.2 2.2 0 0 1 2.2 2.2 V21.8 a2.7 2.7 0 0 1 -2.7 2.7 H2.9 a2.7 2.7 0 0 1 -2.7 -2.7 Z" fill="url(#fg1)"/><path d="M1.6 24.2 H27.2" stroke="#0a5cc2" stroke-width="0.8" stroke-opacity="0.55"/></g><g transform="translate(527.50,361.60)" ><defs><linearGradient id="fg2" x1="0" y1="0" x2="0" y2="1"><stop offset="0" stop-color="#74b7fd"/><stop offset="0.16" stop-color="#3d9bfc"/><stop offset="0.34" stop-color="#0f87fe"/><stop offset="1" stop-color="#0a79f1"/></linearGradient></defs><path d="M0.2 3 a2.8 2.8 0 0 1 2.8 -2.8 H9.6 a2.6 2.6 0 0 1 1.7 0.65 L13.2 2.5 a2.6 2.6 0 0 0 1.7 0.65 H26 a2.6 2.6 0 0 1 2.6 2.6 V10 H0.2 Z" fill="#0b78ee"/><path d="M0.2 8.6 a2.2 2.2 0 0 1 2.2 -2.2 H26.4 a2.2 2.2 0 0 1 2.2 2.2 V21.8 a2.7 2.7 0 0 1 -2.7 2.7 H2.9 a2.7 2.7 0 0 1 -2.7 -2.7 Z" fill="url(#fg2)"/><path d="M1.6 24.2 H27.2" stroke="#0a5cc2" stroke-width="0.8" stroke-opacity="0.55"/></g><g transform="translate(527.50,405.60)" ><defs><linearGradient id="fg3" x1="0" y1="0" x2="0" y2="1"><stop offset="0" stop-color="#74b7fd"/><stop offset="0.16" stop-color="#3d9bfc"/><stop offset="0.34" stop-color="#0f87fe"/><stop offset="1" stop-color="#0a79f1"/></linearGradient></defs><path d="M0.2 3 a2.8 2.8 0 0 1 2.8 -2.8 H9.6 a2.6 2.6 0 0 1 1.7 0.65 L13.2 2.5 a2.6 2.6 0 0 0 1.7 0.65 H26 a2.6 2.6 0 0 1 2.6 2.6 V10 H0.2 Z" fill="#0b78ee"/><path d="M0.2 8.6 a2.2 2.2 0 0 1 2.2 -2.2 H26.4 a2.2 2.2 0 0 1 2.2 2.2 V21.8 a2.7 2.7 0 0 1 -2.7 2.7 H2.9 a2.7 2.7 0 0 1 -2.7 -2.7 Z" fill="url(#fg3)"/><path d="M1.6 24.2 H27.2" stroke="#0a5cc2" stroke-width="0.8" stroke-opacity="0.55"/></g><g transform="translate(529.60,447.80)" ><defs><linearGradient id="dg4" x1="0" y1="0" x2="0" y2="1"><stop offset="0" stop-color="#fdfdfd"/><stop offset="1" stop-color="#e9e9ea"/></linearGradient></defs><path d="M2.6 0.5 H15.50 L24.10 9.10 V26.40 a2.1 2.1 0 0 1 -2.1 2.1 H2.6 a2.1 2.1 0 0 1 -2.1 -2.1 V2.6 a2.1 2.1 0 0 1 2.1 -2.1 Z" fill="url(#dg4)" stroke="#c9ccd0" stroke-width="0.9"/><path d="M15.50 0.5 V6.90 a2.2 2.2 0 0 0 2.2 2.2 H24.10 Z" fill="#fcfcfc" stroke="#c9ccd0" stroke-width="0.7" stroke-linejoin="round"/></g><g transform="translate(530.30,490.60)" ><defs><linearGradient id="dg5" x1="0" y1="0" x2="0" y2="1"><stop offset="0" stop-color="#ffffff"/><stop offset="1" stop-color="#fafafa"/></linearGradient></defs><path d="M2.6 0.5 H14.30 L22.90 9.10 V27.40 a2.1 2.1 0 0 1 -2.1 2.1 H2.6 a2.1 2.1 0 0 1 -2.1 -2.1 V2.6 a2.1 2.1 0 0 1 2.1 -2.1 Z" fill="url(#dg5)" stroke="#d9dcdf" stroke-width="0.9"/><path d="M14.30 0.5 V6.90 a2.2 2.2 0 0 0 2.2 2.2 H22.90 Z" fill="#fcfcfc" stroke="#d9dcdf" stroke-width="0.7" stroke-linejoin="round"/><path d="M5 11.3 H16.6 M5 15 H13.4 M5 18.7 H16.6 M5 22.4 H14.2" stroke="#a9acb0" stroke-width="1.5"/></g><g transform="translate(530.30,534.60)" ><defs><linearGradient id="dg6" x1="0" y1="0" x2="0" y2="1"><stop offset="0" stop-color="#ffffff"/><stop offset="1" stop-color="#fafafa"/></linearGradient></defs><path d="M2.6 0.5 H14.30 L22.90 9.10 V27.40 a2.1 2.1 0 0 1 -2.1 2.1 H2.6 a2.1 2.1 0 0 1 -2.1 -2.1 V2.6 a2.1 2.1 0 0 1 2.1 -2.1 Z" fill="url(#dg6)" stroke="#d9dcdf" stroke-width="0.9"/><path d="M14.30 0.5 V6.90 a2.2 2.2 0 0 0 2.2 2.2 H22.90 Z" fill="#fcfcfc" stroke="#d9dcdf" stroke-width="0.7" stroke-linejoin="round"/><path d="M5 11.3 H16.6 M5 15 H13.4 M5 18.7 H16.6 M5 22.4 H14.2" stroke="#a9acb0" stroke-width="1.5"/></g><g transform="translate(530.30,579.40)" ><defs><linearGradient id="dg7" x1="0" y1="0" x2="0" y2="1"><stop offset="0" stop-color="#f8f8f8"/><stop offset="1" stop-color="#ececed"/></linearGradient></defs><path d="M2.6 0.5 H13.70 L23.10 9.90 V26.80 a2.1 2.1 0 0 1 -2.1 2.1 H2.6 a2.1 2.1 0 0 1 -2.1 -2.1 V2.6 a2.1 2.1 0 0 1 2.1 -2.1 Z" fill="url(#dg7)" stroke="#c9ccd0" stroke-width="0.9"/><path d="M13.70 0.5 V7.70 a2.2 2.2 0 0 0 2.2 2.2 H23.10 Z" fill="#fcfcfc" stroke="#c9ccd0" stroke-width="0.7" stroke-linejoin="round"/><rect x="4.8" y="9" width="12.6" height="9.4" rx="1.3" fill="#b9babd"/><path d="M5.6 16.2 L9 12.6 L11 14.6 L13 13 L16.6 16.2 Z" fill="#ececed"/><circle cx="8.2" cy="11.6" r="1.1" fill="#ececed"/><rect x="4.8" y="16.2" width="12.6" height="2.2" rx="0.8" fill="#b4b5b8"/></g><g transform="translate(530.30,623.40)" ><defs><linearGradient id="dg8" x1="0" y1="0" x2="0" y2="1"><stop offset="0" stop-color="#f8f8f8"/><stop offset="1" stop-color="#ececed"/></linearGradient></defs><path d="M2.6 0.5 H13.70 L23.10 9.90 V26.80 a2.1 2.1 0 0 1 -2.1 2.1 H2.6 a2.1 2.1 0 0 1 -2.1 -2.1 V2.6 a2.1 2.1 0 0 1 2.1 -2.1 Z" fill="url(#dg8)" stroke="#c9ccd0" stroke-width="0.9"/><path d="M13.70 0.5 V7.70 a2.2 2.2 0 0 0 2.2 2.2 H23.10 Z" fill="#fcfcfc" stroke="#c9ccd0" stroke-width="0.7" stroke-linejoin="round"/><rect x="4.8" y="9" width="12.6" height="9.4" rx="1.3" fill="#b9babd"/><path d="M5.6 16.2 L9 12.6 L11 14.6 L13 13 L16.6 16.2 Z" fill="#ececed"/><circle cx="8.2" cy="11.6" r="1.1" fill="#ececed"/><rect x="4.8" y="16.2" width="12.6" height="2.2" rx="0.8" fill="#b4b5b8"/></g><g transform="translate(530.30,667.40)" ><defs><linearGradient id="dg9" x1="0" y1="0" x2="0" y2="1"><stop offset="0" stop-color="#f8f8f8"/><stop offset="1" stop-color="#ececed"/></linearGradient></defs><path d="M2.6 0.5 H13.70 L23.10 9.90 V26.80 a2.1 2.1 0 0 1 -2.1 2.1 H2.6 a2.1 2.1 0 0 1 -2.1 -2.1 V2.6 a2.1 2.1 0 0 1 2.1 -2.1 Z" fill="url(#dg9)" stroke="#c9ccd0" stroke-width="0.9"/><path d="M13.70 0.5 V7.70 a2.2 2.2 0 0 0 2.2 2.2 H23.10 Z" fill="#fcfcfc" stroke="#c9ccd0" stroke-width="0.7" stroke-linejoin="round"/><rect x="4.8" y="9" width="12.6" height="9.4" rx="1.3" fill="#b9babd"/><path d="M5.6 16.2 L9 12.6 L11 14.6 L13 13 L16.6 16.2 Z" fill="#ececed"/><circle cx="8.2" cy="11.6" r="1.1" fill="#ececed"/><rect x="4.8" y="16.2" width="12.6" height="2.2" rx="0.8" fill="#b4b5b8"/></g><g transform="translate(530.30,711.40)" ><defs><linearGradient id="dg10" x1="0" y1="0" x2="0" y2="1"><stop offset="0" stop-color="#f8f8f8"/><stop offset="1" stop-color="#ececed"/></linearGradient></defs><path d="M2.6 0.5 H13.70 L23.10 9.90 V26.80 a2.1 2.1 0 0 1 -2.1 2.1 H2.6 a2.1 2.1 0 0 1 -2.1 -2.1 V2.6 a2.1 2.1 0 0 1 2.1 -2.1 Z" fill="url(#dg10)" stroke="#c9ccd0" stroke-width="0.9"/><path d="M13.70 0.5 V7.70 a2.2 2.2 0 0 0 2.2 2.2 H23.10 Z" fill="#fcfcfc" stroke="#c9ccd0" stroke-width="0.7" stroke-linejoin="round"/><rect x="4.8" y="9" width="12.6" height="9.4" rx="1.3" fill="#b9babd"/><path d="M5.6 16.2 L9 12.6 L11 14.6 L13 13 L16.6 16.2 Z" fill="#ececed"/><circle cx="8.2" cy="11.6" r="1.1" fill="#ececed"/><rect x="4.8" y="16.2" width="12.6" height="2.2" rx="0.8" fill="#b4b5b8"/></g><g transform="translate(530.30,755.40)" ><defs><linearGradient id="dg11" x1="0" y1="0" x2="0" y2="1"><stop offset="0" stop-color="#f8f8f8"/><stop offset="1" stop-color="#ececed"/></linearGradient></defs><path d="M2.6 0.5 H13.70 L23.10 9.90 V26.80 a2.1 2.1 0 0 1 -2.1 2.1 H2.6 a2.1 2.1 0 0 1 -2.1 -2.1 V2.6 a2.1 2.1 0 0 1 2.1 -2.1 Z" fill="url(#dg11)" stroke="#c9ccd0" stroke-width="0.9"/><path d="M13.70 0.5 V7.70 a2.2 2.2 0 0 0 2.2 2.2 H23.10 Z" fill="#fcfcfc" stroke="#c9ccd0" stroke-width="0.7" stroke-linejoin="round"/><rect x="4.8" y="9" width="12.6" height="9.4" rx="1.3" fill="#b9babd"/><path d="M5.6 16.2 L9 12.6 L11 14.6 L13 13 L16.6 16.2 Z" fill="#ececed"/><circle cx="8.2" cy="11.6" r="1.1" fill="#ececed"/><rect x="4.8" y="16.2" width="12.6" height="2.2" rx="0.8" fill="#b4b5b8"/></g><g transform="translate(530.30,799.40)" ><defs><linearGradient id="dg12" x1="0" y1="0" x2="0" y2="1"><stop offset="0" stop-color="#f8f8f8"/><stop offset="1" stop-color="#ececed"/></linearGradient></defs><path d="M2.6 0.5 H13.70 L23.10 9.90 V26.80 a2.1 2.1 0 0 1 -2.1 2.1 H2.6 a2.1 2.1 0 0 1 -2.1 -2.1 V2.6 a2.1 2.1 0 0 1 2.1 -2.1 Z" fill="url(#dg12)" stroke="#c9ccd0" stroke-width="0.9"/><path d="M13.70 0.5 V7.70 a2.2 2.2 0 0 0 2.2 2.2 H23.10 Z" fill="#fcfcfc" stroke="#c9ccd0" stroke-width="0.7" stroke-linejoin="round"/><rect x="4.8" y="9" width="12.6" height="9.4" rx="1.3" fill="#b9babd"/><path d="M5.6 16.2 L9 12.6 L11 14.6 L13 13 L16.6 16.2 Z" fill="#ececed"/><circle cx="8.2" cy="11.6" r="1.1" fill="#ececed"/><rect x="4.8" y="16.2" width="12.6" height="2.2" rx="0.8" fill="#b4b5b8"/></g><g transform="translate(530.30,843.40)" ><defs><linearGradient id="dg13" x1="0" y1="0" x2="0" y2="1"><stop offset="0" stop-color="#f8f8f8"/><stop offset="1" stop-color="#ececed"/></linearGradient></defs><path d="M2.6 0.5 H13.70 L23.10 9.90 V26.80 a2.1 2.1 0 0 1 -2.1 2.1 H2.6 a2.1 2.1 0 0 1 -2.1 -2.1 V2.6 a2.1 2.1 0 0 1 2.1 -2.1 Z" fill="url(#dg13)" stroke="#c9ccd0" stroke-width="0.9"/><path d="M13.70 0.5 V7.70 a2.2 2.2 0 0 0 2.2 2.2 H23.10 Z" fill="#fcfcfc" stroke="#c9ccd0" stroke-width="0.7" stroke-linejoin="round"/><rect x="4.8" y="9" width="12.6" height="9.4" rx="1.3" fill="#b9babd"/><path d="M5.6 16.2 L9 12.6 L11 14.6 L13 13 L16.6 16.2 Z" fill="#ececed"/><circle cx="8.2" cy="11.6" r="1.1" fill="#ececed"/><rect x="4.8" y="16.2" width="12.6" height="2.2" rx="0.8" fill="#b4b5b8"/></g><g transform="translate(530.30,887.40)" ><defs><linearGradient id="dg14" x1="0" y1="0" x2="0" y2="1"><stop offset="0" stop-color="#f8f8f8"/><stop offset="1" stop-color="#ececed"/></linearGradient></defs><path d="M2.6 0.5 H13.70 L23.10 9.90 V26.80 a2.1 2.1 0 0 1 -2.1 2.1 H2.6 a2.1 2.1 0 0 1 -2.1 -2.1 V2.6 a2.1 2.1 0 0 1 2.1 -2.1 Z" fill="url(#dg14)" stroke="#c9ccd0" stroke-width="0.9"/><path d="M13.70 0.5 V7.70 a2.2 2.2 0 0 0 2.2 2.2 H23.10 Z" fill="#fcfcfc" stroke="#c9ccd0" stroke-width="0.7" stroke-linejoin="round"/><rect x="4.8" y="9" width="12.6" height="9.4" rx="1.3" fill="#b9babd"/><path d="M5.6 16.2 L9 12.6 L11 14.6 L13 13 L16.6 16.2 Z" fill="#ececed"/><circle cx="8.2" cy="11.6" r="1.1" fill="#ececed"/><rect x="4.8" y="16.2" width="12.6" height="2.2" rx="0.8" fill="#b4b5b8"/></g><g transform="translate(530.30,931.40)" ><defs><linearGradient id="dg15" x1="0" y1="0" x2="0" y2="1"><stop offset="0" stop-color="#f8f8f8"/><stop offset="1" stop-color="#ececed"/></linearGradient></defs><path d="M2.6 0.5 H13.70 L23.10 9.90 V26.80 a2.1 2.1 0 0 1 -2.1 2.1 H2.6 a2.1 2.1 0 0 1 -2.1 -2.1 V2.6 a2.1 2.1 0 0 1 2.1 -2.1 Z" fill="url(#dg15)" stroke="#c9ccd0" stroke-width="0.9"/><path d="M13.70 0.5 V7.70 a2.2 2.2 0 0 0 2.2 2.2 H23.10 Z" fill="#fcfcfc" stroke="#c9ccd0" stroke-width="0.7" stroke-linejoin="round"/><rect x="4.8" y="9" width="12.6" height="9.4" rx="1.3" fill="#b9babd"/><path d="M5.6 16.2 L9 12.6 L11 14.6 L13 13 L16.6 16.2 Z" fill="#ececed"/><circle cx="8.2" cy="11.6" r="1.1" fill="#ececed"/><rect x="4.8" y="16.2" width="12.6" height="2.2" rx="0.8" fill="#b4b5b8"/></g><g transform="translate(530.30,975.40)" ><defs><linearGradient id="dg16" x1="0" y1="0" x2="0" y2="1"><stop offset="0" stop-color="#f8f8f8"/><stop offset="1" stop-color="#ececed"/></linearGradient></defs><path d="M2.6 0.5 H13.70 L23.10 9.90 V26.80 a2.1 2.1 0 0 1 -2.1 2.1 H2.6 a2.1 2.1 0 0 1 -2.1 -2.1 V2.6 a2.1 2.1 0 0 1 2.1 -2.1 Z" fill="url(#dg16)" stroke="#c9ccd0" stroke-width="0.9"/><path d="M13.70 0.5 V7.70 a2.2 2.2 0 0 0 2.2 2.2 H23.10 Z" fill="#fcfcfc" stroke="#c9ccd0" stroke-width="0.7" stroke-linejoin="round"/><rect x="4.8" y="9" width="12.6" height="9.4" rx="1.3" fill="#b9babd"/><path d="M5.6 16.2 L9 12.6 L11 14.6 L13 13 L16.6 16.2 Z" fill="#ececed"/><circle cx="8.2" cy="11.6" r="1.1" fill="#ececed"/><rect x="4.8" y="16.2" width="12.6" height="2.2" rx="0.8" fill="#b4b5b8"/></g><g transform="translate(530.30,1019.40)" ><defs><linearGradient id="dg17" x1="0" y1="0" x2="0" y2="1"><stop offset="0" stop-color="#f8f8f8"/><stop offset="1" stop-color="#ececed"/></linearGradient></defs><path d="M2.6 0.5 H13.70 L23.10 9.90 V26.80 a2.1 2.1 0 0 1 -2.1 2.1 H2.6 a2.1 2.1 0 0 1 -2.1 -2.1 V2.6 a2.1 2.1 0 0 1 2.1 -2.1 Z" fill="url(#dg17)" stroke="#c9ccd0" stroke-width="0.9"/><path d="M13.70 0.5 V7.70 a2.2 2.2 0 0 0 2.2 2.2 H23.10 Z" fill="#fcfcfc" stroke="#c9ccd0" stroke-width="0.7" stroke-linejoin="round"/><rect x="4.8" y="9" width="12.6" height="9.4" rx="1.3" fill="#b9babd"/><path d="M5.6 16.2 L9 12.6 L11 14.6 L13 13 L16.6 16.2 Z" fill="#ececed"/><circle cx="8.2" cy="11.6" r="1.1" fill="#ececed"/><rect x="4.8" y="16.2" width="12.6" height="2.2" rx="0.8" fill="#b4b5b8"/></g><g transform="translate(530.30,1063.40)" ><defs><linearGradient id="dg18" x1="0" y1="0" x2="0" y2="1"><stop offset="0" stop-color="#f8f8f8"/><stop offset="1" stop-color="#ececed"/></linearGradient></defs><path d="M2.6 0.5 H13.70 L23.10 9.90 V26.80 a2.1 2.1 0 0 1 -2.1 2.1 H2.6 a2.1 2.1 0 0 1 -2.1 -2.1 V2.6 a2.1 2.1 0 0 1 2.1 -2.1 Z" fill="url(#dg18)" stroke="#c9ccd0" stroke-width="0.9"/><path d="M13.70 0.5 V7.70 a2.2 2.2 0 0 0 2.2 2.2 H23.10 Z" fill="#fcfcfc" stroke="#c9ccd0" stroke-width="0.7" stroke-linejoin="round"/><rect x="4.8" y="9" width="12.6" height="9.4" rx="1.3" fill="#b9babd"/><path d="M5.6 16.2 L9 12.6 L11 14.6 L13 13 L16.6 16.2 Z" fill="#ececed"/><circle cx="8.2" cy="11.6" r="1.1" fill="#ececed"/><rect x="4.8" y="16.2" width="12.6" height="2.2" rx="0.8" fill="#b4b5b8"/></g><g transform="translate(530.30,1107.40)" ><defs><linearGradient id="dg19" x1="0" y1="0" x2="0" y2="1"><stop offset="0" stop-color="#f8f8f8"/><stop offset="1" stop-color="#ececed"/></linearGradient></defs><path d="M2.6 0.5 H13.70 L23.10 9.90 V26.80 a2.1 2.1 0 0 1 -2.1 2.1 H2.6 a2.1 2.1 0 0 1 -2.1 -2.1 V2.6 a2.1 2.1 0 0 1 2.1 -2.1 Z" fill="url(#dg19)" stroke="#c9ccd0" stroke-width="0.9"/><path d="M13.70 0.5 V7.70 a2.2 2.2 0 0 0 2.2 2.2 H23.10 Z" fill="#fcfcfc" stroke="#c9ccd0" stroke-width="0.7" stroke-linejoin="round"/><rect x="4.8" y="9" width="12.6" height="9.4" rx="1.3" fill="#b9babd"/><path d="M5.6 16.2 L9 12.6 L11 14.6 L13 13 L16.6 16.2 Z" fill="#ececed"/><circle cx="8.2" cy="11.6" r="1.1" fill="#ececed"/><rect x="4.8" y="16.2" width="12.6" height="2.2" rx="0.8" fill="#b4b5b8"/></g><g transform="translate(530.30,1151.40)" ><defs><linearGradient id="dg20" x1="0" y1="0" x2="0" y2="1"><stop offset="0" stop-color="#f8f8f8"/><stop offset="1" stop-color="#ececed"/></linearGradient></defs><path d="M2.6 0.5 H13.70 L23.10 9.90 V26.80 a2.1 2.1 0 0 1 -2.1 2.1 H2.6 a2.1 2.1 0 0 1 -2.1 -2.1 V2.6 a2.1 2.1 0 0 1 2.1 -2.1 Z" fill="url(#dg20)" stroke="#c9ccd0" stroke-width="0.9"/><path d="M13.70 0.5 V7.70 a2.2 2.2 0 0 0 2.2 2.2 H23.10 Z" fill="#fcfcfc" stroke="#c9ccd0" stroke-width="0.7" stroke-linejoin="round"/><rect x="4.8" y="9" width="12.6" height="9.4" rx="1.3" fill="#b9babd"/><path d="M5.6 16.2 L9 12.6 L11 14.6 L13 13 L16.6 16.2 Z" fill="#ececed"/><circle cx="8.2" cy="11.6" r="1.1" fill="#ececed"/><rect x="4.8" y="16.2" width="12.6" height="2.2" rx="0.8" fill="#b4b5b8"/></g><g transform="translate(530.30,1195.40)" ><defs><linearGradient id="dg21" x1="0" y1="0" x2="0" y2="1"><stop offset="0" stop-color="#f8f8f8"/><stop offset="1" stop-color="#ececed"/></linearGradient></defs><path d="M2.6 0.5 H13.70 L23.10 9.90 V26.80 a2.1 2.1 0 0 1 -2.1 2.1 H2.6 a2.1 2.1 0 0 1 -2.1 -2.1 V2.6 a2.1 2.1 0 0 1 2.1 -2.1 Z" fill="url(#dg21)" stroke="#c9ccd0" stroke-width="0.9"/><path d="M13.70 0.5 V7.70 a2.2 2.2 0 0 0 2.2 2.2 H23.10 Z" fill="#fcfcfc" stroke="#c9ccd0" stroke-width="0.7" stroke-linejoin="round"/><rect x="4.8" y="9" width="12.6" height="9.4" rx="1.3" fill="#b9babd"/><path d="M5.6 16.2 L9 12.6 L11 14.6 L13 13 L16.6 16.2 Z" fill="#ececed"/><circle cx="8.2" cy="11.6" r="1.1" fill="#ececed"/><rect x="4.8" y="16.2" width="12.6" height="2.2" rx="0.8" fill="#b4b5b8"/></g><g transform="translate(530.30,1239.40)" ><defs><linearGradient id="dg22" x1="0" y1="0" x2="0" y2="1"><stop offset="0" stop-color="#f8f8f8"/><stop offset="1" stop-color="#ececed"/></linearGradient></defs><path d="M2.6 0.5 H13.70 L23.10 9.90 V26.80 a2.1 2.1 0 0 1 -2.1 2.1 H2.6 a2.1 2.1 0 0 1 -2.1 -2.1 V2.6 a2.1 2.1 0 0 1 2.1 -2.1 Z" fill="url(#dg22)" stroke="#c9ccd0" stroke-width="0.9"/><path d="M13.70 0.5 V7.70 a2.2 2.2 0 0 0 2.2 2.2 H23.10 Z" fill="#fcfcfc" stroke="#c9ccd0" stroke-width="0.7" stroke-linejoin="round"/><rect x="4.8" y="9" width="12.6" height="9.4" rx="1.3" fill="#b9babd"/><path d="M5.6 16.2 L9 12.6 L11 14.6 L13 13 L16.6 16.2 Z" fill="#ececed"/><circle cx="8.2" cy="11.6" r="1.1" fill="#ececed"/><rect x="4.8" y="16.2" width="12.6" height="2.2" rx="0.8" fill="#b4b5b8"/></g><g transform="translate(530.30,1283.40)" ><defs><linearGradient id="dg23" x1="0" y1="0" x2="0" y2="1"><stop offset="0" stop-color="#f8f8f8"/><stop offset="1" stop-color="#ececed"/></linearGradient></defs><path d="M2.6 0.5 H13.70 L23.10 9.90 V26.80 a2.1 2.1 0 0 1 -2.1 2.1 H2.6 a2.1 2.1 0 0 1 -2.1 -2.1 V2.6 a2.1 2.1 0 0 1 2.1 -2.1 Z" fill="url(#dg23)" stroke="#c9ccd0" stroke-width="0.9"/><path d="M13.70 0.5 V7.70 a2.2 2.2 0 0 0 2.2 2.2 H23.10 Z" fill="#fcfcfc" stroke="#c9ccd0" stroke-width="0.7" stroke-linejoin="round"/><rect x="4.8" y="9" width="12.6" height="9.4" rx="1.3" fill="#b9babd"/><path d="M5.6 16.2 L9 12.6 L11 14.6 L13 13 L16.6 16.2 Z" fill="#ececed"/><circle cx="8.2" cy="11.6" r="1.1" fill="#ececed"/><rect x="4.8" y="16.2" width="12.6" height="2.2" rx="0.8" fill="#b4b5b8"/></g><g transform="translate(530.30,1327.40)" ><defs><linearGradient id="dg24" x1="0" y1="0" x2="0" y2="1"><stop offset="0" stop-color="#f8f8f8"/><stop offset="1" stop-color="#ececed"/></linearGradient></defs><path d="M2.6 0.5 H13.70 L23.10 9.90 V26.80 a2.1 2.1 0 0 1 -2.1 2.1 H2.6 a2.1 2.1 0 0 1 -2.1 -2.1 V2.6 a2.1 2.1 0 0 1 2.1 -2.1 Z" fill="url(#dg24)" stroke="#c9ccd0" stroke-width="0.9"/><path d="M13.70 0.5 V7.70 a2.2 2.2 0 0 0 2.2 2.2 H23.10 Z" fill="#fcfcfc" stroke="#c9ccd0" stroke-width="0.7" stroke-linejoin="round"/><rect x="4.8" y="9" width="12.6" height="9.4" rx="1.3" fill="#b9babd"/><path d="M5.6 16.2 L9 12.6 L11 14.6 L13 13 L16.6 16.2 Z" fill="#ececed"/><circle cx="8.2" cy="11.6" r="1.1" fill="#ececed"/><rect x="4.8" y="16.2" width="12.6" height="2.2" rx="0.8" fill="#b4b5b8"/></g><g transform="translate(530.30,1371.40)" ><defs><linearGradient id="dg25" x1="0" y1="0" x2="0" y2="1"><stop offset="0" stop-color="#f8f8f8"/><stop offset="1" stop-color="#ececed"/></linearGradient></defs><path d="M2.6 0.5 H13.70 L23.10 9.90 V26.80 a2.1 2.1 0 0 1 -2.1 2.1 H2.6 a2.1 2.1 0 0 1 -2.1 -2.1 V2.6 a2.1 2.1 0 0 1 2.1 -2.1 Z" fill="url(#dg25)" stroke="#c9ccd0" stroke-width="0.9"/><path d="M13.70 0.5 V7.70 a2.2 2.2 0 0 0 2.2 2.2 H23.10 Z" fill="#fcfcfc" stroke="#c9ccd0" stroke-width="0.7" stroke-linejoin="round"/><rect x="4.8" y="9" width="12.6" height="9.4" rx="1.3" fill="#b9babd"/><path d="M5.6 16.2 L9 12.6 L11 14.6 L13 13 L16.6 16.2 Z" fill="#ececed"/><circle cx="8.2" cy="11.6" r="1.1" fill="#ececed"/><rect x="4.8" y="16.2" width="12.6" height="2.2" rx="0.8" fill="#b4b5b8"/></g><g transform="translate(530.30,1415.40)" ><defs><linearGradient id="dg26" x1="0" y1="0" x2="0" y2="1"><stop offset="0" stop-color="#f8f8f8"/><stop offset="1" stop-color="#ececed"/></linearGradient></defs><path d="M2.6 0.5 H13.70 L23.10 9.90 V26.80 a2.1 2.1 0 0 1 -2.1 2.1 H2.6 a2.1 2.1 0 0 1 -2.1 -2.1 V2.6 a2.1 2.1 0 0 1 2.1 -2.1 Z" fill="url(#dg26)" stroke="#c9ccd0" stroke-width="0.9"/><path d="M13.70 0.5 V7.70 a2.2 2.2 0 0 0 2.2 2.2 H23.10 Z" fill="#fcfcfc" stroke="#c9ccd0" stroke-width="0.7" stroke-linejoin="round"/><rect x="4.8" y="9" width="12.6" height="9.4" rx="1.3" fill="#b9babd"/><path d="M5.6 16.2 L9 12.6 L11 14.6 L13 13 L16.6 16.2 Z" fill="#ececed"/><circle cx="8.2" cy="11.6" r="1.1" fill="#ececed"/><rect x="4.8" y="16.2" width="12.6" height="2.2" rx="0.8" fill="#b4b5b8"/></g><g transform="translate(530.30,1459.40)" ><defs><linearGradient id="dg27" x1="0" y1="0" x2="0" y2="1"><stop offset="0" stop-color="#f8f8f8"/><stop offset="1" stop-color="#ececed"/></linearGradient></defs><path d="M2.6 0.5 H13.70 L23.10 9.90 V26.80 a2.1 2.1 0 0 1 -2.1 2.1 H2.6 a2.1 2.1 0 0 1 -2.1 -2.1 V2.6 a2.1 2.1 0 0 1 2.1 -2.1 Z" fill="url(#dg27)" stroke="#c9ccd0" stroke-width="0.9"/><path d="M13.70 0.5 V7.70 a2.2 2.2 0 0 0 2.2 2.2 H23.10 Z" fill="#fcfcfc" stroke="#c9ccd0" stroke-width="0.7" stroke-linejoin="round"/><rect x="4.8" y="9" width="12.6" height="9.4" rx="1.3" fill="#b9babd"/><path d="M5.6 16.2 L9 12.6 L11 14.6 L13 13 L16.6 16.2 Z" fill="#ececed"/><circle cx="8.2" cy="11.6" r="1.1" fill="#ececed"/><rect x="4.8" y="16.2" width="12.6" height="2.2" rx="0.8" fill="#b4b5b8"/></g><g transform="translate(530.30,1503.40)" ><defs><linearGradient id="dg28" x1="0" y1="0" x2="0" y2="1"><stop offset="0" stop-color="#f8f8f8"/><stop offset="1" stop-color="#ececed"/></linearGradient></defs><path d="M2.6 0.5 H13.70 L23.10 9.90 V26.80 a2.1 2.1 0 0 1 -2.1 2.1 H2.6 a2.1 2.1 0 0 1 -2.1 -2.1 V2.6 a2.1 2.1 0 0 1 2.1 -2.1 Z" fill="url(#dg28)" stroke="#c9ccd0" stroke-width="0.9"/><path d="M13.70 0.5 V7.70 a2.2 2.2 0 0 0 2.2 2.2 H23.10 Z" fill="#fcfcfc" stroke="#c9ccd0" stroke-width="0.7" stroke-linejoin="round"/><rect x="4.8" y="9" width="12.6" height="9.4" rx="1.3" fill="#b9babd"/><path d="M5.6 16.2 L9 12.6 L11 14.6 L13 13 L16.6 16.2 Z" fill="#ececed"/><circle cx="8.2" cy="11.6" r="1.1" fill="#ececed"/><rect x="4.8" y="16.2" width="12.6" height="2.2" rx="0.8" fill="#b4b5b8"/></g><g transform="translate(530.30,1547.40)" ><defs><linearGradient id="dg29" x1="0" y1="0" x2="0" y2="1"><stop offset="0" stop-color="#f8f8f8"/><stop offset="1" stop-color="#ececed"/></linearGradient></defs><path d="M2.6 0.5 H13.70 L23.10 9.90 V26.80 a2.1 2.1 0 0 1 -2.1 2.1 H2.6 a2.1 2.1 0 0 1 -2.1 -2.1 V2.6 a2.1 2.1 0 0 1 2.1 -2.1 Z" fill="url(#dg29)" stroke="#c9ccd0" stroke-width="0.9"/><path d="M13.70 0.5 V7.70 a2.2 2.2 0 0 0 2.2 2.2 H23.10 Z" fill="#fcfcfc" stroke="#c9ccd0" stroke-width="0.7" stroke-linejoin="round"/><rect x="4.8" y="9" width="12.6" height="9.4" rx="1.3" fill="#b9babd"/><path d="M5.6 16.2 L9 12.6 L11 14.6 L13 13 L16.6 16.2 Z" fill="#ececed"/><circle cx="8.2" cy="11.6" r="1.1" fill="#ececed"/><rect x="4.8" y="16.2" width="12.6" height="2.2" rx="0.8" fill="#b4b5b8"/></g><g transform="translate(530.30,1591.40)" ><defs><linearGradient id="dg30" x1="0" y1="0" x2="0" y2="1"><stop offset="0" stop-color="#f8f8f8"/><stop offset="1" stop-color="#ececed"/></linearGradient></defs><path d="M2.6 0.5 H13.70 L23.10 9.90 V26.80 a2.1 2.1 0 0 1 -2.1 2.1 H2.6 a2.1 2.1 0 0 1 -2.1 -2.1 V2.6 a2.1 2.1 0 0 1 2.1 -2.1 Z" fill="url(#dg30)" stroke="#c9ccd0" stroke-width="0.9"/><path d="M13.70 0.5 V7.70 a2.2 2.2 0 0 0 2.2 2.2 H23.10 Z" fill="#fcfcfc" stroke="#c9ccd0" stroke-width="0.7" stroke-linejoin="round"/><rect x="4.8" y="9" width="12.6" height="9.4" rx="1.3" fill="#b9babd"/><path d="M5.6 16.2 L9 12.6 L11 14.6 L13 13 L16.6 16.2 Z" fill="#ececed"/><circle cx="8.2" cy="11.6" r="1.1" fill="#ececed"/><rect x="4.8" y="16.2" width="12.6" height="2.2" rx="0.8" fill="#b4b5b8"/></g><g transform="translate(530.30,1635.40)" ><defs><linearGradient id="dg31" x1="0" y1="0" x2="0" y2="1"><stop offset="0" stop-color="#f8f8f8"/><stop offset="1" stop-color="#ececed"/></linearGradient></defs><path d="M2.6 0.5 H13.70 L23.10 9.90 V26.80 a2.1 2.1 0 0 1 -2.1 2.1 H2.6 a2.1 2.1 0 0 1 -2.1 -2.1 V2.6 a2.1 2.1 0 0 1 2.1 -2.1 Z" fill="url(#dg31)" stroke="#c9ccd0" stroke-width="0.9"/><path d="M13.70 0.5 V7.70 a2.2 2.2 0 0 0 2.2 2.2 H23.10 Z" fill="#fcfcfc" stroke="#c9ccd0" stroke-width="0.7" stroke-linejoin="round"/><rect x="4.8" y="9" width="12.6" height="9.4" rx="1.3" fill="#b9babd"/><path d="M5.6 16.2 L9 12.6 L11 14.6 L13 13 L16.6 16.2 Z" fill="#ececed"/><circle cx="8.2" cy="11.6" r="1.1" fill="#ececed"/><rect x="4.8" y="16.2" width="12.6" height="2.2" rx="0.8" fill="#b4b5b8"/></g><path d="M643.2 280.6 L648.6 291 H637.8 Z" fill="#0a4a8f"/><g transform="translate(1717.50,317.60)" ><defs><linearGradient id="fg32" x1="0" y1="0" x2="0" y2="1"><stop offset="0" stop-color="#74b7fd"/><stop offset="0.16" stop-color="#3d9bfc"/><stop offset="0.34" stop-color="#0f87fe"/><stop offset="1" stop-color="#0a79f1"/></linearGradient></defs><path d="M0.2 3 a2.8 2.8 0 0 1 2.8 -2.8 H9.6 a2.6 2.6 0 0 1 1.7 0.65 L13.2 2.5 a2.6 2.6 0 0 0 1.7 0.65 H26 a2.6 2.6 0 0 1 2.6 2.6 V10 H0.2 Z" fill="#0b78ee"/><path d="M0.2 8.6 a2.2 2.2 0 0 1 2.2 -2.2 H26.4 a2.2 2.2 0 0 1 2.2 2.2 V21.8 a2.7 2.7 0 0 1 -2.7 2.7 H2.9 a2.7 2.7 0 0 1 -2.7 -2.7 Z" fill="url(#fg32)"/><path d="M1.6 24.2 H27.2" stroke="#0a5cc2" stroke-width="0.8" stroke-opacity="0.55"/></g><g transform="translate(1717.50,361.60)" ><defs><linearGradient id="fg33" x1="0" y1="0" x2="0" y2="1"><stop offset="0" stop-color="#74b7fd"/><stop offset="0.16" stop-color="#3d9bfc"/><stop offset="0.34" stop-color="#0f87fe"/><stop offset="1" stop-color="#0a79f1"/></linearGradient></defs><path d="M0.2 3 a2.8 2.8 0 0 1 2.8 -2.8 H9.6 a2.6 2.6 0 0 1 1.7 0.65 L13.2 2.5 a2.6 2.6 0 0 0 1.7 0.65 H26 a2.6 2.6 0 0 1 2.6 2.6 V10 H0.2 Z" fill="#0b78ee"/><path d="M0.2 8.6 a2.2 2.2 0 0 1 2.2 -2.2 H26.4 a2.2 2.2 0 0 1 2.2 2.2 V21.8 a2.7 2.7 0 0 1 -2.7 2.7 H2.9 a2.7 2.7 0 0 1 -2.7 -2.7 Z" fill="url(#fg33)"/><path d="M1.6 24.2 H27.2" stroke="#0a5cc2" stroke-width="0.8" stroke-opacity="0.55"/></g><g transform="translate(1717.50,405.60)" ><defs><linearGradient id="fg34" x1="0" y1="0" x2="0" y2="1"><stop offset="0" stop-color="#74b7fd"/><stop offset="0.16" stop-color="#3d9bfc"/><stop offset="0.34" stop-color="#0f87fe"/><stop offset="1" stop-color="#0a79f1"/></linearGradient></defs><path d="M0.2 3 a2.8 2.8 0 0 1 2.8 -2.8 H9.6 a2.6 2.6 0 0 1 1.7 0.65 L13.2 2.5 a2.6 2.6 0 0 0 1.7 0.65 H26 a2.6 2.6 0 0 1 2.6 2.6 V10 H0.2 Z" fill="#0b78ee"/><path d="M0.2 8.6 a2.2 2.2 0 0 1 2.2 -2.2 H26.4 a2.2 2.2 0 0 1 2.2 2.2 V21.8 a2.7 2.7 0 0 1 -2.7 2.7 H2.9 a2.7 2.7 0 0 1 -2.7 -2.7 Z" fill="url(#fg34)"/><path d="M1.6 24.2 H27.2" stroke="#0a5cc2" stroke-width="0.8" stroke-opacity="0.55"/></g><g transform="translate(1717.50,449.60)" ><defs><linearGradient id="fg35" x1="0" y1="0" x2="0" y2="1"><stop offset="0" stop-color="#74b7fd"/><stop offset="0.16" stop-color="#3d9bfc"/><stop offset="0.34" stop-color="#0f87fe"/><stop offset="1" stop-color="#0a79f1"/></linearGradient></defs><path d="M0.2 3 a2.8 2.8 0 0 1 2.8 -2.8 H9.6 a2.6 2.6 0 0 1 1.7 0.65 L13.2 2.5 a2.6 2.6 0 0 0 1.7 0.65 H26 a2.6 2.6 0 0 1 2.6 2.6 V10 H0.2 Z" fill="#0b78ee"/><path d="M0.2 8.6 a2.2 2.2 0 0 1 2.2 -2.2 H26.4 a2.2 2.2 0 0 1 2.2 2.2 V21.8 a2.7 2.7 0 0 1 -2.7 2.7 H2.9 a2.7 2.7 0 0 1 -2.7 -2.7 Z" fill="url(#fg35)"/><path d="M1.6 24.2 H27.2" stroke="#0a5cc2" stroke-width="0.8" stroke-opacity="0.55"/></g><g transform="translate(1717.50,493.60)" ><defs><linearGradient id="fg36" x1="0" y1="0" x2="0" y2="1"><stop offset="0" stop-color="#74b7fd"/><stop offset="0.16" stop-color="#3d9bfc"/><stop offset="0.34" stop-color="#0f87fe"/><stop offset="1" stop-color="#0a79f1"/></linearGradient></defs><path d="M0.2 3 a2.8 2.8 0 0 1 2.8 -2.8 H9.6 a2.6 2.6 0 0 1 1.7 0.65 L13.2 2.5 a2.6 2.6 0 0 0 1.7 0.65 H26 a2.6 2.6 0 0 1 2.6 2.6 V10 H0.2 Z" fill="#0b78ee"/><path d="M0.2 8.6 a2.2 2.2 0 0 1 2.2 -2.2 H26.4 a2.2 2.2 0 0 1 2.2 2.2 V21.8 a2.7 2.7 0 0 1 -2.7 2.7 H2.9 a2.7 2.7 0 0 1 -2.7 -2.7 Z" fill="url(#fg36)"/><path d="M1.6 24.2 H27.2" stroke="#0a5cc2" stroke-width="0.8" stroke-opacity="0.55"/></g><g transform="translate(1717.50,537.60)" ><defs><linearGradient id="fg37" x1="0" y1="0" x2="0" y2="1"><stop offset="0" stop-color="#74b7fd"/><stop offset="0.16" stop-color="#3d9bfc"/><stop offset="0.34" stop-color="#0f87fe"/><stop offset="1" stop-color="#0a79f1"/></linearGradient></defs><path d="M0.2 3 a2.8 2.8 0 0 1 2.8 -2.8 H9.6 a2.6 2.6 0 0 1 1.7 0.65 L13.2 2.5 a2.6 2.6 0 0 0 1.7 0.65 H26 a2.6 2.6 0 0 1 2.6 2.6 V10 H0.2 Z" fill="#0b78ee"/><path d="M0.2 8.6 a2.2 2.2 0 0 1 2.2 -2.2 H26.4 a2.2 2.2 0 0 1 2.2 2.2 V21.8 a2.7 2.7 0 0 1 -2.7 2.7 H2.9 a2.7 2.7 0 0 1 -2.7 -2.7 Z" fill="url(#fg37)"/><path d="M1.6 24.2 H27.2" stroke="#0a5cc2" stroke-width="0.8" stroke-opacity="0.55"/></g><g transform="translate(1717.50,581.60)" ><defs><linearGradient id="fg38" x1="0" y1="0" x2="0" y2="1"><stop offset="0" stop-color="#74b7fd"/><stop offset="0.16" stop-color="#3d9bfc"/><stop offset="0.34" stop-color="#0f87fe"/><stop offset="1" stop-color="#0a79f1"/></linearGradient></defs><path d="M0.2 3 a2.8 2.8 0 0 1 2.8 -2.8 H9.6 a2.6 2.6 0 0 1 1.7 0.65 L13.2 2.5 a2.6 2.6 0 0 0 1.7 0.65 H26 a2.6 2.6 0 0 1 2.6 2.6 V10 H0.2 Z" fill="#0b78ee"/><path d="M0.2 8.6 a2.2 2.2 0 0 1 2.2 -2.2 H26.4 a2.2 2.2 0 0 1 2.2 2.2 V21.8 a2.7 2.7 0 0 1 -2.7 2.7 H2.9 a2.7 2.7 0 0 1 -2.7 -2.7 Z" fill="url(#fg38)"/><path d="M1.6 24.2 H27.2" stroke="#0a5cc2" stroke-width="0.8" stroke-opacity="0.55"/></g><g transform="translate(1717.50,625.60)" ><defs><linearGradient id="fg39" x1="0" y1="0" x2="0" y2="1"><stop offset="0" stop-color="#74b7fd"/><stop offset="0.16" stop-color="#3d9bfc"/><stop offset="0.34" stop-color="#0f87fe"/><stop offset="1" stop-color="#0a79f1"/></linearGradient></defs><path d="M0.2 3 a2.8 2.8 0 0 1 2.8 -2.8 H9.6 a2.6 2.6 0 0 1 1.7 0.65 L13.2 2.5 a2.6 2.6 0 0 0 1.7 0.65 H26 a2.6 2.6 0 0 1 2.6 2.6 V10 H0.2 Z" fill="#0b78ee"/><path d="M0.2 8.6 a2.2 2.2 0 0 1 2.2 -2.2 H26.4 a2.2 2.2 0 0 1 2.2 2.2 V21.8 a2.7 2.7 0 0 1 -2.7 2.7 H2.9 a2.7 2.7 0 0 1 -2.7 -2.7 Z" fill="url(#fg39)"/><path d="M1.6 24.2 H27.2" stroke="#0a5cc2" stroke-width="0.8" stroke-opacity="0.55"/></g><g transform="translate(1720.80,668.40)" ><defs><linearGradient id="bg40" x1="0" y1="0" x2="0" y2="1"><stop offset="0" stop-color="#4ac6de"/><stop offset="1" stop-color="#2aa5c5"/></linearGradient></defs><rect x="0.3" y="0.3" width="21.8" height="26.8" rx="1.6" fill="#c4c5c7"/><rect x="19.6" y="24.6" width="2" height="1.6" fill="#f4f4f4"/><path d="M0.3 1.9 a1.6 1.6 0 0 1 1.6 -1.6 H20.5 a1.6 1.6 0 0 1 1.6 1.6 V24.2 H0.3 Z" fill="url(#bg40)"/><g fill="none" stroke="#2191b0" stroke-width="0.85"><circle cx="11.2" cy="12.6" r="5.3"/><ellipse cx="11.2" cy="12.6" rx="2.3" ry="5.3"/><path d="M5.9 12.6 H16.5 M6.8 9.8 H15.6 M6.8 15.4 H15.6 M11.2 7.3 V17.9"/></g></g><g transform="translate(1720.80,712.40)" ><defs><linearGradient id="bg41" x1="0" y1="0" x2="0" y2="1"><stop offset="0" stop-color="#4ac6de"/><stop offset="1" stop-color="#2aa5c5"/></linearGradient></defs><rect x="0.3" y="0.3" width="21.8" height="26.8" rx="1.6" fill="#c4c5c7"/><rect x="19.6" y="24.6" width="2" height="1.6" fill="#f4f4f4"/><path d="M0.3 1.9 a1.6 1.6 0 0 1 1.6 -1.6 H20.5 a1.6 1.6 0 0 1 1.6 1.6 V24.2 H0.3 Z" fill="url(#bg41)"/><g fill="none" stroke="#2191b0" stroke-width="0.85"><circle cx="11.2" cy="12.6" r="5.3"/><ellipse cx="11.2" cy="12.6" rx="2.3" ry="5.3"/><path d="M5.9 12.6 H16.5 M6.8 9.8 H15.6 M6.8 15.4 H15.6 M11.2 7.3 V17.9"/></g></g><g transform="translate(1720.80,756.40)" ><defs><linearGradient id="bg42" x1="0" y1="0" x2="0" y2="1"><stop offset="0" stop-color="#4ac6de"/><stop offset="1" stop-color="#2aa5c5"/></linearGradient></defs><rect x="0.3" y="0.3" width="21.8" height="26.8" rx="1.6" fill="#c4c5c7"/><rect x="19.6" y="24.6" width="2" height="1.6" fill="#f4f4f4"/><path d="M0.3 1.9 a1.6 1.6 0 0 1 1.6 -1.6 H20.5 a1.6 1.6 0 0 1 1.6 1.6 V24.2 H0.3 Z" fill="url(#bg42)"/><g fill="none" stroke="#2191b0" stroke-width="0.85"><circle cx="11.2" cy="12.6" r="5.3"/><ellipse cx="11.2" cy="12.6" rx="2.3" ry="5.3"/><path d="M5.9 12.6 H16.5 M6.8 9.8 H15.6 M6.8 15.4 H15.6 M11.2 7.3 V17.9"/></g></g><g transform="translate(1720.60,799.40)" ><defs><linearGradient id="dg43" x1="0" y1="0" x2="0" y2="1"><stop offset="0" stop-color="#ffffff"/><stop offset="1" stop-color="#f1f1f1"/></linearGradient></defs><path d="M2.6 0.5 H15.20 L22.90 8.20 V26.80 a2.1 2.1 0 0 1 -2.1 2.1 H2.6 a2.1 2.1 0 0 1 -2.1 -2.1 V2.6 a2.1 2.1 0 0 1 2.1 -2.1 Z" fill="url(#dg43)" stroke="#cfd2d5" stroke-width="0.9"/><path d="M15.20 0.5 V6.00 a2.2 2.2 0 0 0 2.2 2.2 H22.90 Z" fill="#fcfcfc" stroke="#cfd2d5" stroke-width="0.7" stroke-linejoin="round"/><path d="M3.6 5.2 H6.6 M7.7 5.2 H10.7 M11.8 5.2 H14.2 M3.6 7.6 H8.2 M9.3 7.6 H11.5 M12.6 7.6 H14.2 M3.6 9.9 H8.2 M9.3 9.9 H13.1 M14.2 9.9 H17.2 M3.6 12.2 H6.6 M7.7 12.2 H12.3 M13.4 12.2 H18.0 M3.6 14.6 H8.2 M9.3 14.6 H12.3 M13.4 14.6 H16.4 M17.5 14.6 H19.6 M3.6 16.9 H8.2 M9.3 16.9 H11.5 M12.6 16.9 H14.8 M15.9 16.9 H18.9 M3.6 19.3 H5.8 M6.9 19.3 H10.7 M11.8 19.3 H14.0 M15.1 19.3 H18.9 M3.6 21.7 H8.2 M9.3 21.7 H13.9 M15.0 21.7 H19.6 M3.6 24.0 H8.2 M9.3 24.0 H13.9 M15.0 24.0 H18.0 " stroke="#8e9094" stroke-width="0.95"/></g><path d="M1833.2 280.6 L1838.6 291 H1827.8 Z" fill="#0a4a8f"/><g transform="translate(519.80,229.20)" ><path d="M0.87 3.32 a2.46 2.46 0 0 1 2.46 -2.46 H7.08 a1.81 1.81 0 0 1 1.30 0.58 L9.32 2.46 a1.81 1.81 0 0 0 1.30 0.58 H19.08 a2.46 2.46 0 0 1 2.46 2.46 V14.48 a2.46 2.46 0 0 1 -2.46 2.46 H3.32 a2.46 2.46 0 0 1 -2.46 -2.46 Z" fill="none" stroke="#0a4a8f" stroke-width="1.8" stroke-linecap="round" stroke-linejoin="round"/><path d="M1.16 6.00 H21.24" fill="none" stroke="#0a4a8f" stroke-width="1.5" stroke-linecap="butt" stroke-linejoin="round"/></g><circle cx="1719.9" cy="237.9" r="9.2" fill="none" stroke="#065a80" stroke-width="1.7" stroke-linecap="round" stroke-linejoin="round"/><g transform="rotate(-22 1719.9 237.9)"><ellipse cx="1719.9" cy="237.9" rx="3.86" ry="9.2" fill="none" stroke="#065a80" stroke-width="1.224" stroke-linecap="round" stroke-linejoin="round"/><path d="M1719.9 228.70000000000002 V247.1" fill="none" stroke="#065a80" stroke-width="1.224" stroke-linecap="round" stroke-linejoin="round"/><path d="M1712.26 232.84 Q1719.9 236.80 1727.54 232.84 M1710.70 239.00 Q1719.9 243.60 1729.10 239.00 M1713.28 244.34 Q1719.9 247.10 1726.52 244.34" fill="none" stroke="#065a80" stroke-width="1.224" stroke-linecap="round" stroke-linejoin="round"/></g></svg>
<div style="position:absolute;left:0px;top:1680px;width:2880px;height:48px;background:#1c1c1c;"></div>
<div style="position:absolute;left:0px;top:1726.4px;width:2880px;height:1.6px;background:#0b0b0b;"></div>
<span class="t s" style="left:8.00px;top:1694.98px;font-size:22px;color:#a2a2a2;letter-spacing:-0.110px;">/Users/norbert/Projekte/Xcode/Flowistry/website/images</span>
<span class="t s b" style="left:557.20px;top:1694.33px;font-size:23px;color:#e6e6e6;font-weight:bold;-webkit-text-stroke:0.5px;">&gt;</span>
<span class="t m" style="left:583.20px;top:1691.59px;font-size:26px;color:#8c8c8c;letter-spacing:0.037px;">Command</span>
<div style="position:absolute;left:0px;top:1728px;width:2880px;height:72px;background:linear-gradient(#bcd8ef,#bcd8ef 1.4px,#c4daec 1.5px,#cbe2f3 22px);"></div>
<div style="position:absolute;left:479.2px;top:1728px;width:1.6px;height:72px;background:rgba(170,200,228,.38);"></div>
<div style="position:absolute;left:959.2px;top:1728px;width:1.6px;height:72px;background:rgba(170,200,228,.38);"></div>
<div style="position:absolute;left:1439.2px;top:1728px;width:1.6px;height:72px;background:rgba(170,200,228,.38);"></div>
<div style="position:absolute;left:1919.2px;top:1728px;width:1.6px;height:72px;background:rgba(170,200,228,.38);"></div>
<div style="position:absolute;left:2399.2px;top:1728px;width:1.6px;height:72px;background:rgba(170,200,228,.38);"></div>
<span class="t s b" style="left:149.60px;top:1755.07px;font-size:20px;color:#33536f;font-weight:bold;letter-spacing:0.256px;">F3</span>
<span class="t s" style="left:248.80px;top:1754.38px;font-size:22px;color:#101c35;letter-spacing:0.807px;text-shadow:0.3px 0 0 #101c35;">Ansehen</span>
<span class="t s b" style="left:646.00px;top:1755.07px;font-size:20px;color:#33536f;font-weight:bold;letter-spacing:0.256px;">F4</span>
<span class="t s" style="left:734.70px;top:1754.38px;font-size:22px;color:#101c35;letter-spacing:0.694px;text-shadow:0.3px 0 0 #101c35;">Bearb.</span>
<span class="t s b" style="left:1112.40px;top:1755.07px;font-size:20px;color:#33536f;font-weight:bold;letter-spacing:0.256px;">F5</span>
<span class="t s" style="left:1205.40px;top:1754.38px;font-size:22px;color:#101c35;letter-spacing:0.632px;text-shadow:0.3px 0 0 #101c35;">Kopieren</span>
<span class="t s b" style="left:1599.60px;top:1755.07px;font-size:20px;color:#33536f;font-weight:bold;letter-spacing:0.256px;">F6</span>
<span class="t s" style="left:1693.00px;top:1754.38px;font-size:22px;color:#101c35;letter-spacing:0.938px;text-shadow:0.3px 0 0 #101c35;">Versch.</span>
<span class="t s b" style="left:2082.00px;top:1755.07px;font-size:20px;color:#33536f;font-weight:bold;letter-spacing:0.256px;">F7</span>
<span class="t s" style="left:2176.60px;top:1754.38px;font-size:22px;color:#101c35;letter-spacing:0.983px;text-shadow:0.3px 0 0 #101c35;">Ordner</span>
<span class="t s b" style="left:2557.00px;top:1755.07px;font-size:20px;color:#33536f;font-weight:bold;letter-spacing:0.256px;">F8</span>
<span class="t s" style="left:2647.00px;top:1754.38px;font-size:22px;color:#101c35;letter-spacing:0.969px;text-shadow:0.3px 0 0 #101c35;">Löschen</span>
<svg class="ov" width="2880" height="1800" viewBox="0 0 2880 1800"><g transform="translate(201.00,1755.00)" ><path d="M1.02 9.70 C6.83 0.85 25.17 0.85 30.98 9.70 C25.17 18.55 6.83 18.55 1.02 9.70 Z" fill="none" stroke="#101c35" stroke-width="2.2" stroke-linecap="round" stroke-linejoin="round"/><circle cx="16.00" cy="9.70" r="5.63" fill="#101c35"/><circle cx="16.00" cy="9.70" r="1.96" fill="#cbe2f3"/></g><g transform="translate(699.60,1752.40)" ><path d="M2.4 18.6 L15.6 5.4" fill="none" stroke="#101c35" stroke-width="3.0" stroke-linecap="butt" stroke-linejoin="round"/><path d="M17.2 3.8 L18.8 2.2" fill="none" stroke="#101c35" stroke-width="3.0" stroke-linecap="round" stroke-linejoin="round"/><path d="M0.5 20.6 L3.7 19.7 L1.4 17.4 Z" fill="#101c35"/></g><g transform="translate(1165,1749.4) scale(0.86)"><g transform="translate(0.00,0.00)" ><path d="M7.6 7.2 V5 a3.4 3.4 0 0 1 3.4 -3.4 H18.6 L26.9 9.6 V23.1 a3.4 3.4 0 0 1 -3.4 3.4 H21" fill="none" stroke="#101c35" stroke-width="2.4" stroke-linecap="round" stroke-linejoin="round"/><path d="M17.9 2 V8.3 a1.8 1.8 0 0 0 1.8 1.8 H26.4" fill="none" stroke="#101c35" stroke-width="2.4" stroke-linecap="round" stroke-linejoin="round"/><path d="M4.5 7.7 H11.2 L19.8 17.1 V30.1 a3.4 3.4 0 0 1 -3.4 3.4 H4.5 a3.4 3.4 0 0 1 -3.4 -3.4 V11.1 a3.4 3.4 0 0 1 3.4 -3.4 z" fill="none" stroke="#101c35" stroke-width="2.4" stroke-linecap="round" stroke-linejoin="round"/><path d="M9.5 8.2 V16.7 a1.8 1.8 0 0 0 1.8 1.8 H19.4" fill="none" stroke="#101c35" stroke-width="2.4" stroke-linecap="round" stroke-linejoin="round"/></g></g><g transform="translate(1653.00,1749.40)" ><path d="M9 0 H21.2 a3 3 0 0 1 3 3 V20.5 a3 3 0 0 1 -3 3 H19.6 V9 a3.4 3.4 0 0 0 -3.4 -3.4 H6 V3 a3 3 0 0 1 3 -3 Z" fill="#101c35"/><rect x="1.1" y="7.6" width="16.2" height="20.8" rx="3" fill="none" stroke="#101c35" stroke-width="2.1" stroke-linecap="round" stroke-linejoin="round"/><path d="M4.6 18 H13.2 M10.2 14.6 L13.6 18 L10.2 21.4" fill="none" stroke="#101c35" stroke-width="1.7" stroke-linecap="round" stroke-linejoin="round"/></g><g transform="translate(2134,1753.2) scale(0.86)"><g transform="translate(0.00,0.00)" ><path d="M29.8 16.2 V21 a3.4 3.4 0 0 1 -3.4 3.4 H4.6 a3.4 3.4 0 0 1 -3.4 -3.4 V4.6 a3.4 3.4 0 0 1 3.4 -3.4 H9.5 a2.5 2.5 0 0 1 1.8 0.8 L12.6 3.4 a2.5 2.5 0 0 0 1.8 0.8 H20.5" fill="none" stroke="#101c35" stroke-width="2.4" stroke-linecap="round" stroke-linejoin="round"/><path d="M4.8 8.2 H20" fill="none" stroke="#101c35" stroke-width="2.4" stroke-linecap="round" stroke-linejoin="round"/><circle cx="30.2" cy="7.2" r="6.6" fill="#101c35"/><path d="M26.8 7.2 h6.8 M30.2 3.8 v6.8" fill="none" stroke="#cbe2f3" stroke-width="1.9" stroke-linecap="round" stroke-linejoin="round"/></g></g><g transform="translate(2609.60,1750.60)" ><path d="M1 5.2 H21.4 M7.6 5 V3.2 a2 2 0 0 1 2 -2 H12.8 a2 2 0 0 1 2 2 V5" fill="none" stroke="#101c35" stroke-width="2.0" stroke-linecap="round" stroke-linejoin="round"/><path d="M3.2 5.6 L4.4 24.2 a2.8 2.8 0 0 0 2.8 2.6 H15.2 a2.8 2.8 0 0 0 2.8 -2.6 L19.2 5.6" fill="none" stroke="#101c35" stroke-width="2.0" stroke-linecap="round" stroke-linejoin="round"/><path d="M7.7 9.6 L8.2 22.4 M11.2 9.6 V22.4 M14.7 9.6 L14.2 22.4" fill="none" stroke="#101c35" stroke-width="1.6" stroke-linecap="round" stroke-linejoin="round"/></g></svg>
</div></body></html>
